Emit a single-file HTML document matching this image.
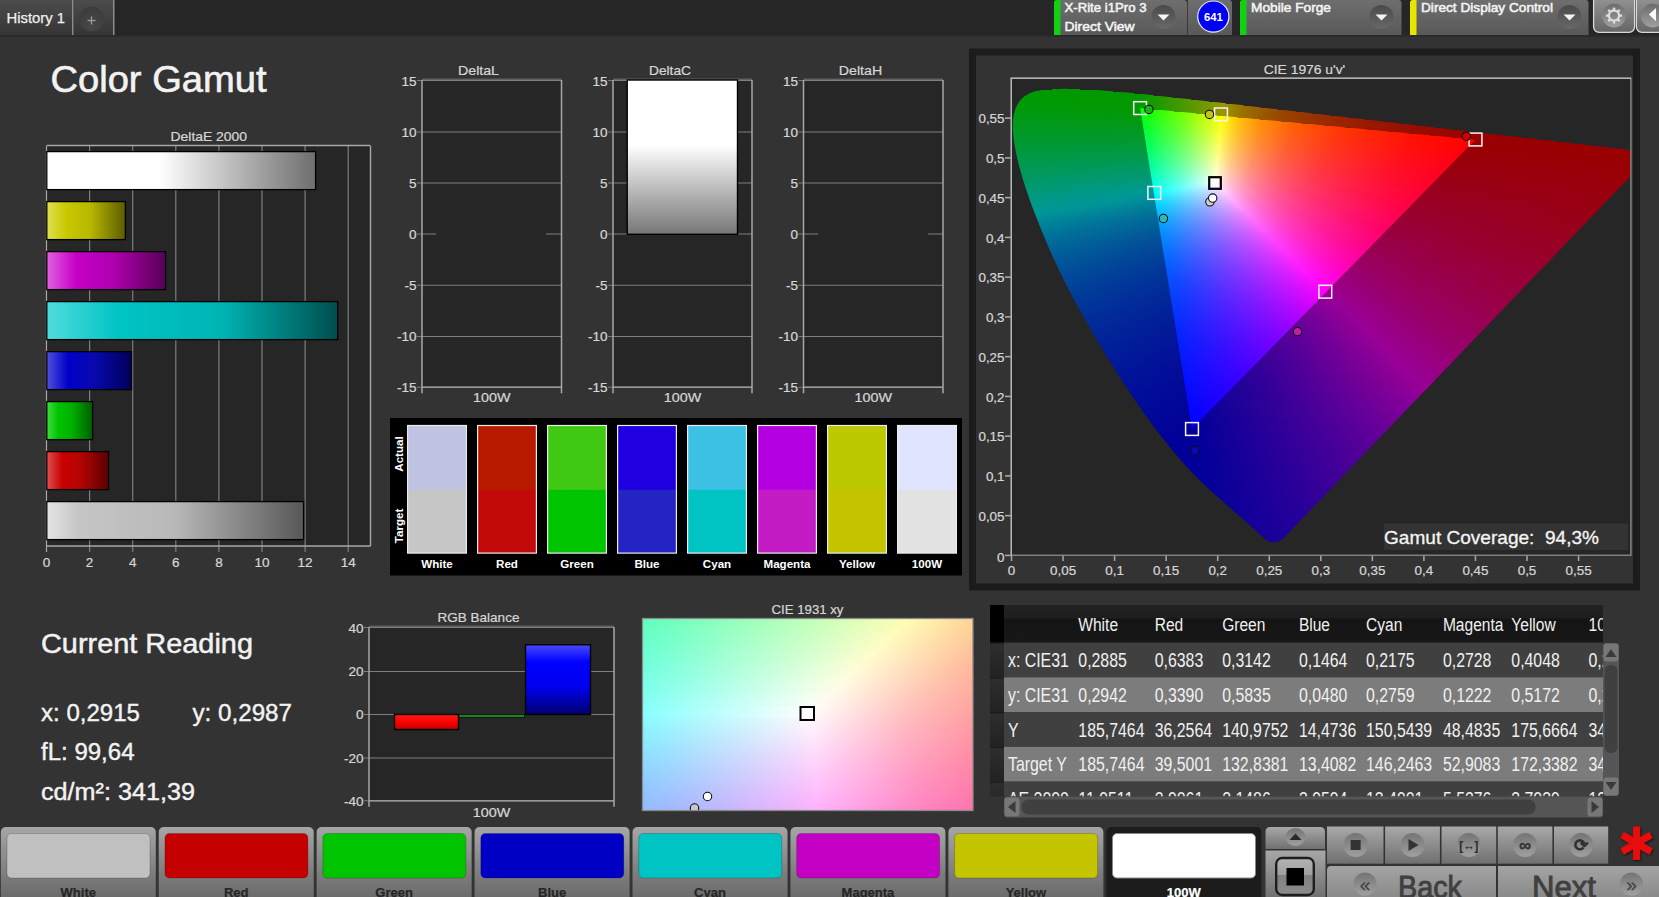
<!DOCTYPE html>
<html><head><meta charset="utf-8"><title>Color Gamut</title>
<style>
html,body{margin:0;padding:0;background:#333;}
body{width:1659px;height:897px;overflow:hidden;position:relative;font-family:"Liberation Sans", sans-serif;}
#cie,#tri,#xy{position:absolute;overflow:hidden}
#cie{left:1011px;top:78px;width:620px;height:478px;background:#262626}
#tri{left:0;top:0;width:620px;height:478px;clip-path:polygon(464.5px 61.5px,129.1px 30.1px,181.0px 351.0px)}
#xy{left:643px;top:619px;width:330px;height:191px}
#cie i,#xy i{position:absolute;display:block}
#cie i{height:2px}
#xy i{height:3px;left:0;width:330px}
svg{position:absolute;left:0;top:0}
svg text{font-family:"Liberation Sans", sans-serif;}
</style></head><body>
<div id="cie">
<i style="top:10px;left:41px;width:28px;background:linear-gradient(90deg,#090 0.5px,#090 27.5px)"></i>
<i style="top:12px;left:22px;width:80px;background:linear-gradient(90deg,#090 0.5px,#090 79.5px)"></i>
<i style="top:14px;left:16px;width:108px;background:linear-gradient(90deg,#090 0.5px,#090 107.5px)"></i>
<i style="top:16px;left:12px;width:131px;background:linear-gradient(90deg,#090 0.5px,#029900 116.5px,#129900 129.5px,#129900 130.5px)"></i>
<i style="top:18px;left:10px;width:152px;background:linear-gradient(90deg,#090 0.5px,#039900 119.5px,#309900 150.5px,#309900 151.5px)"></i>
<i style="top:20px;left:7px;width:173px;background:linear-gradient(90deg,#009902 0.5px,#039900 122.5px,#4f9900 170.5px,#4f9900 172.5px)"></i>
<i style="top:22px;left:6px;width:192px;background:linear-gradient(90deg,#009904 0.5px,#029900 123.5px,#590 173.5px,#739900 189.5px,#739900 191.5px)"></i>
<i style="top:24px;left:4px;width:211px;background:linear-gradient(90deg,#009906 0.5px,#029900 125.5px,#539900 174.5px,#990 208.5px,#990 210.5px)"></i>
<i style="top:26px;left:3px;width:230px;background:linear-gradient(90deg,#009908 0.5px,#039900 127.5px,#590 176.5px,#999600 209.5px,#997600 227.5px,#997600 229.5px)"></i>
<i style="top:28px;left:2px;width:248px;background:linear-gradient(90deg,#00990b 0.5px,#029900 128.5px,#590 177.5px,#999600 210.5px,#996900 235.5px,#995e00 247.5px)"></i>
<i style="top:30px;left:1px;width:266px;background:linear-gradient(90deg,#00990d 0.5px,#029901 129.5px,#590 178.5px,#999800 210.5px,#996c00 234.5px,#994c00 264.5px,#994c00 265.5px)"></i>
<i style="top:32px;left:1px;width:284px;background:linear-gradient(90deg,#00990f 0.5px,#039904 130.5px,#590 178.5px,#999700 210.5px,#996b00 234.5px,#940 271.5px,#993d00 283.5px)"></i>
<i style="top:34px;left:0px;width:302px;background:linear-gradient(90deg,#091 0.5px,#029906 131.5px,#699900 189.5px,#999700 211.5px,#996b00 235.5px,#940 272.5px,#993200 301.5px)"></i>
<i style="top:36px;left:0px;width:320px;background:linear-gradient(90deg,#009913 0.5px,#029909 131.5px,#999700 211.5px,#996a00 235.5px,#994300 272.5px,#992900 319.5px)"></i>
<i style="top:38px;left:0px;width:337px;background:linear-gradient(90deg,#009915 0.5px,#03990c 132.5px,#997f00 222.5px,#950 252.5px,#993100 299.5px,#992100 336.5px)"></i>
<i style="top:40px;left:0px;width:354px;background:linear-gradient(90deg,#009917 0.5px,#02990f 132.5px,#995c00 245.5px,#993700 288.5px,#991b00 353.5px)"></i>
<i style="top:42px;left:0px;width:372px;background:linear-gradient(90deg,#009919 0.5px,#029912 132.5px,#994700 266.5px,#992500 323.5px,#991500 371.5px)"></i>
<i style="top:44px;left:0px;width:389px;background:linear-gradient(90deg,#00991c 0.5px,#039915 133.5px,#993600 288.5px,#991700 361.5px,#910 388.5px)"></i>
<i style="top:46px;left:0px;width:406px;background:linear-gradient(90deg,#00991e 0.5px,#039918 133.5px,#992a00 310.5px,#990d00 401.5px,#990c00 405.5px)"></i>
<i style="top:48px;left:0px;width:424px;background:linear-gradient(90deg,#009920 0.5px,#02991b 133.5px,#992000 331.5px,#990900 423.5px)"></i>
<i style="top:50px;left:0px;width:441px;background:linear-gradient(90deg,#092 0.5px,#02991e 133.5px,#991800 354.5px,#990500 440.5px)"></i>
<i style="top:52px;left:0px;width:458px;background:linear-gradient(90deg,#009924 0.5px,#039921 134.5px,#991200 375.5px,#990300 457.5px)"></i>
<i style="top:54px;left:0px;width:476px;background:linear-gradient(90deg,#009927 0.5px,#029924 134.5px,#990c00 397.5px,#900 475.5px)"></i>
<i style="top:56px;left:0px;width:493px;background:linear-gradient(90deg,#009929 0.5px,#029927 134.5px,#990800 419.5px,#900 492.5px)"></i>
<i style="top:58px;left:0px;width:511px;background:linear-gradient(90deg,#00992b 0.5px,#03992a 135.5px,#990400 441.5px,#900 510.5px)"></i>
<i style="top:60px;left:0px;width:528px;background:linear-gradient(90deg,#00992e 0.5px,#02992d 135.5px,#900 462.5px,#900 527.5px)"></i>
<i style="top:62px;left:0px;width:545px;background:linear-gradient(90deg,#009930 0.5px,#029931 135.5px,#990001 466.5px,#900 544.5px)"></i>
<i style="top:64px;left:0px;width:563px;background:linear-gradient(90deg,#009932 0.5px,#039934 136.5px,#990002 464.5px,#900 562.5px)"></i>
<i style="top:66px;left:1px;width:579px;background:linear-gradient(90deg,#009935 0.5px,#029937 135.5px,#990002 461.5px,#900 578.5px)"></i>
<i style="top:68px;left:1px;width:597px;background:linear-gradient(90deg,#009937 0.5px,#02993b 135.5px,#990003 459.5px,#900 596.5px)"></i>
<i style="top:70px;left:1px;width:614px;background:linear-gradient(90deg,#00993a 0.5px,#03993e 136.5px,#990004 457.5px,#900 613.5px)"></i>
<i style="top:72px;left:2px;width:618px;background:linear-gradient(90deg,#00993c 0.5px,#029942 135.5px,#990005 454.5px,#900 617.5px)"></i>
<i style="top:74px;left:2px;width:618px;background:linear-gradient(90deg,#00993e 0.5px,#029945 135.5px,#990006 452.5px,#900 617.5px)"></i>
<i style="top:76px;left:3px;width:617px;background:linear-gradient(90deg,#009941 0.5px,#039949 135.5px,#990007 449.5px,#900 616.5px)"></i>
<i style="top:78px;left:3px;width:617px;background:linear-gradient(90deg,#094 0.5px,#03994d 135.5px,#990009 447.5px,#990001 616.5px)"></i>
<i style="top:80px;left:3px;width:617px;background:linear-gradient(90deg,#009946 0.5px,#029950 135.5px,#99000a 445.5px,#990001 616.5px)"></i>
<i style="top:82px;left:4px;width:616px;background:linear-gradient(90deg,#009949 0.5px,#019954 134.5px,#99000b 442.5px,#990002 615.5px)"></i>
<i style="top:84px;left:4px;width:616px;background:linear-gradient(90deg,#00994b 0.5px,#039958 135.5px,#99000c 441.5px,#990003 615.5px)"></i>
<i style="top:86px;left:5px;width:615px;background:linear-gradient(90deg,#00994e 0.5px,#02995c 134.5px,#99000d 438.5px,#990003 614.5px)"></i>
<i style="top:88px;left:5px;width:615px;background:linear-gradient(90deg,#009951 0.5px,#019960 134.5px,#99000e 435.5px,#990004 614.5px)"></i>
<i style="top:90px;left:6px;width:614px;background:linear-gradient(90deg,#009953 0.5px,#039964 134.5px,#99000f 432.5px,#990004 613.5px)"></i>
<i style="top:92px;left:7px;width:613px;background:linear-gradient(90deg,#009956 0.5px,#029968 133.5px,#990010 429.5px,#990005 612.5px)"></i>
<i style="top:94px;left:7px;width:613px;background:linear-gradient(90deg,#009959 0.5px,#02996c 133.5px,#990012 427.5px,#990006 612.5px)"></i>
<i style="top:96px;left:8px;width:612px;background:linear-gradient(90deg,#00995c 0.5px,#039970 133.5px,#990013 424.5px,#990006 611.5px)"></i>
<i style="top:98px;left:8px;width:612px;background:linear-gradient(90deg,#00995f 0.5px,#029975 133.5px,#990014 422.5px,#990007 611.5px)"></i>
<i style="top:100px;left:9px;width:611px;background:linear-gradient(90deg,#009962 0.5px,#029979 132.5px,#990015 419.5px,#990008 610.5px)"></i>
<i style="top:102px;left:9px;width:609px;background:linear-gradient(90deg,#009964 0.5px,#03997e 133.5px,#990016 417.5px,#990008 608.5px)"></i>
<i style="top:104px;left:10px;width:606px;background:linear-gradient(90deg,#009968 0.5px,#029982 132.5px,#990018 414.5px,#990009 605.5px)"></i>
<i style="top:106px;left:11px;width:603px;background:linear-gradient(90deg,#00996b 0.5px,#029986 131.5px,#990019 411.5px,#99000a 602.5px)"></i>
<i style="top:108px;left:11px;width:601px;background:linear-gradient(90deg,#00996e 0.5px,#00998a 129.5px,#99001a 409.5px,#99000a 600.5px)"></i>
<i style="top:110px;left:12px;width:598px;background:linear-gradient(90deg,#009971 0.5px,#00998e 125.5px,#09948d 140.5px,#99001c 406.5px,#99000b 597.5px)"></i>
<i style="top:112px;left:13px;width:595px;background:linear-gradient(90deg,#009974 0.5px,#009992 122.5px,#049995 131.5px,#99001d 403.5px,#99000c 594.5px)"></i>
<i style="top:114px;left:13px;width:593px;background:linear-gradient(90deg,#097 0.5px,#009995 119.5px,#039899 131.5px,#99001e 401.5px,#99000d 592.5px)"></i>
<i style="top:116px;left:14px;width:591px;background:linear-gradient(90deg,#00997a 0.5px,#009699 124.5px,#3c5c6c 229.5px,#990020 398.5px,#99000d 590.5px)"></i>
<i style="top:118px;left:15px;width:588px;background:linear-gradient(90deg,#00997e 0.5px,#009699 111.5px,#028f99 129.5px,#990021 395.5px,#99000e 587.5px)"></i>
<i style="top:120px;left:15px;width:586px;background:linear-gradient(90deg,#009981 0.5px,#009699 100.5px,#038b99 130.5px,#990023 393.5px,#99000f 585.5px)"></i>
<i style="top:122px;left:16px;width:583px;background:linear-gradient(90deg,#009984 0.5px,#009699 87.5px,#028699 129.5px,#990024 390.5px,#990010 582.5px)"></i>
<i style="top:124px;left:17px;width:580px;background:linear-gradient(90deg,#098 0.5px,#009699 75.5px,#028399 128.5px,#990026 387.5px,#990010 577.5px,#990010 579.5px)"></i>
<i style="top:126px;left:18px;width:577px;background:linear-gradient(90deg,#00998b 0.5px,#009599 63.5px,#037e99 128.5px,#990027 384.5px,#901 570.5px,#901 576.5px)"></i>
<i style="top:128px;left:18px;width:575px;background:linear-gradient(90deg,#00998f 0.5px,#009599 52.5px,#027b99 128.5px,#990029 382.5px,#990012 563.5px,#990012 574.5px)"></i>
<i style="top:130px;left:19px;width:572px;background:linear-gradient(90deg,#009992 0.5px,#009499 42.5px,#027899 127.5px,#99002b 378.5px,#990014 552.5px,#990013 571.5px)"></i>
<i style="top:132px;left:20px;width:569px;background:linear-gradient(90deg,#009996 0.5px,#008e99 49.5px,#037499 127.5px,#99002c 375.5px,#990015 544.5px,#990013 568.5px)"></i>
<i style="top:134px;left:21px;width:566px;background:linear-gradient(90deg,#009899 0.5px,#027199 126.5px,#99002e 373.5px,#990016 538.5px,#990014 565.5px)"></i>
<i style="top:136px;left:21px;width:564px;background:linear-gradient(90deg,#009599 0.5px,#026e99 126.5px,#990030 371.5px,#990018 531.5px,#990015 563.5px)"></i>
<i style="top:138px;left:22px;width:561px;background:linear-gradient(90deg,#009199 0.5px,#036a99 126.5px,#990031 368.5px,#990019 523.5px,#990016 560.5px)"></i>
<i style="top:140px;left:23px;width:559px;background:linear-gradient(90deg,#008e99 0.5px,#026899 125.5px,#903 365.5px,#99001a 516.5px,#990017 558.5px)"></i>
<i style="top:142px;left:24px;width:556px;background:linear-gradient(90deg,#008b99 0.5px,#026599 124.5px,#990035 362.5px,#99001c 508.5px,#990018 555.5px)"></i>
<i style="top:144px;left:25px;width:553px;background:linear-gradient(90deg,#008799 0.5px,#036299 124.5px,#990037 359.5px,#99001d 501.5px,#990018 552.5px)"></i>
<i style="top:146px;left:25px;width:551px;background:linear-gradient(90deg,#008499 0.5px,#025f99 124.5px,#990039 357.5px,#99001f 495.5px,#990019 550.5px)"></i>
<i style="top:148px;left:26px;width:548px;background:linear-gradient(90deg,#008199 0.5px,#035d99 124.5px,#99003a 354.5px,#990020 488.5px,#99001a 547.5px)"></i>
<i style="top:150px;left:27px;width:545px;background:linear-gradient(90deg,#007e99 0.5px,#025a99 123.5px,#99003c 351.5px,#902 481.5px,#99001b 544.5px)"></i>
<i style="top:152px;left:28px;width:542px;background:linear-gradient(90deg,#007b99 0.5px,#025899 122.5px,#99003e 348.5px,#990023 475.5px,#99001c 541.5px)"></i>
<i style="top:154px;left:29px;width:539px;background:linear-gradient(90deg,#007999 0.5px,#035699 122.5px,#990040 345.5px,#990025 468.5px,#99001d 538.5px)"></i>
<i style="top:156px;left:29px;width:537px;background:linear-gradient(90deg,#007699 0.5px,#025399 122.5px,#990042 343.5px,#990027 463.5px,#99001e 536.5px)"></i>
<i style="top:158px;left:30px;width:534px;background:linear-gradient(90deg,#007499 0.5px,#025199 121.5px,#990045 340.5px,#990028 456.5px,#99001f 533.5px)"></i>
<i style="top:160px;left:31px;width:531px;background:linear-gradient(90deg,#007199 0.5px,#034f99 121.5px,#990047 337.5px,#99002a 450.5px,#990020 530.5px)"></i>
<i style="top:162px;left:32px;width:528px;background:linear-gradient(90deg,#006e99 0.5px,#024d99 120.5px,#990049 334.5px,#99002c 444.5px,#990021 527.5px)"></i>
<i style="top:164px;left:33px;width:526px;background:linear-gradient(90deg,#006c99 0.5px,#024b99 119.5px,#99004b 331.5px,#99002e 438.5px,#990021 525.5px)"></i>
<i style="top:166px;left:34px;width:523px;background:linear-gradient(90deg,#006a99 0.5px,#034999 119.5px,#99004e 328.5px,#990030 432.5px,#902 522.5px)"></i>
<i style="top:168px;left:35px;width:520px;background:linear-gradient(90deg,#006799 0.5px,#024799 118.5px,#990050 325.5px,#990031 426.5px,#990023 519.5px)"></i>
<i style="top:170px;left:35px;width:518px;background:linear-gradient(90deg,#006599 0.5px,#034599 119.5px,#990052 323.5px,#990034 421.5px,#990024 517.5px)"></i>
<i style="top:172px;left:36px;width:515px;background:linear-gradient(90deg,#006399 0.5px,#034499 118.5px,#905 320.5px,#990036 415.5px,#990025 514.5px)"></i>
<i style="top:174px;left:37px;width:512px;background:linear-gradient(90deg,#006199 0.5px,#024299 117.5px,#990058 316.5px,#990038 408.5px,#990026 511.5px)"></i>
<i style="top:176px;left:38px;width:509px;background:linear-gradient(90deg,#005f99 0.5px,#034099 117.5px,#99005a 313.5px,#99003a 402.5px,#990027 508.5px)"></i>
<i style="top:178px;left:39px;width:506px;background:linear-gradient(90deg,#005d99 0.5px,#033f99 116.5px,#99005d 310.5px,#99003c 397.5px,#990028 505.5px)"></i>
<i style="top:180px;left:40px;width:503px;background:linear-gradient(90deg,#005b99 0.5px,#023d99 115.5px,#990060 307.5px,#99003f 391.5px,#990029 502.5px)"></i>
<i style="top:182px;left:41px;width:500px;background:linear-gradient(90deg,#005999 0.5px,#033c99 115.5px,#990062 305.5px,#990040 388.5px,#99002b 499.5px)"></i>
<i style="top:184px;left:42px;width:497px;background:linear-gradient(90deg,#005799 0.5px,#023a99 114.5px,#990065 302.5px,#990043 382.5px,#99002c 496.5px)"></i>
<i style="top:186px;left:43px;width:494px;background:linear-gradient(90deg,#059 0.5px,#023999 113.5px,#990068 299.5px,#990045 377.5px,#99002d 493.5px)"></i>
<i style="top:188px;left:44px;width:492px;background:linear-gradient(90deg,#005399 0.5px,#033799 113.5px,#99006b 296.5px,#990048 372.5px,#99002e 491.5px)"></i>
<i style="top:190px;left:45px;width:489px;background:linear-gradient(90deg,#005299 0.5px,#023699 112.5px,#99006e 293.5px,#99004a 367.5px,#99002f 488.5px)"></i>
<i style="top:192px;left:45px;width:487px;background:linear-gradient(90deg,#005099 0.5px,#033599 113.5px,#990071 291.5px,#99004d 363.5px,#990030 484.5px,#990030 486.5px)"></i>
<i style="top:194px;left:46px;width:484px;background:linear-gradient(90deg,#004e99 0.5px,#033399 112.5px,#990074 288.5px,#990050 357.5px,#990032 477.5px,#990031 483.5px)"></i>
<i style="top:196px;left:47px;width:481px;background:linear-gradient(90deg,#004d99 0.5px,#023299 111.5px,#907 285.5px,#990053 352.5px,#990034 467.5px,#990032 480.5px)"></i>
<i style="top:198px;left:48px;width:478px;background:linear-gradient(90deg,#004b99 0.5px,#033199 111.5px,#99007b 282.5px,#905 348.5px,#990036 460.5px,#903 477.5px)"></i>
<i style="top:200px;left:49px;width:475px;background:linear-gradient(90deg,#004999 0.5px,#033099 110.5px,#99007e 279.5px,#990058 343.5px,#990039 450.5px,#990035 474.5px)"></i>
<i style="top:202px;left:50px;width:472px;background:linear-gradient(90deg,#004899 0.5px,#022e99 109.5px,#990082 276.5px,#99005b 338.5px,#99003b 441.5px,#990036 471.5px)"></i>
<i style="top:204px;left:51px;width:469px;background:linear-gradient(90deg,#004699 0.5px,#032d99 109.5px,#990085 273.5px,#99005f 333.5px,#99003e 432.5px,#990037 468.5px)"></i>
<i style="top:206px;left:52px;width:466px;background:linear-gradient(90deg,#004599 0.5px,#032c99 108.5px,#990089 270.5px,#990062 328.5px,#990040 424.5px,#990038 465.5px)"></i>
<i style="top:208px;left:53px;width:463px;background:linear-gradient(90deg,#004399 0.5px,#022b99 107.5px,#99008d 267.5px,#990065 323.5px,#990043 415.5px,#990039 462.5px)"></i>
<i style="top:210px;left:55px;width:459px;background:linear-gradient(90deg,#004299 0.5px,#032a99 106.5px,#990091 263.5px,#990069 318.5px,#990046 407.5px,#99003b 458.5px)"></i>
<i style="top:212px;left:56px;width:457px;background:linear-gradient(90deg,#004099 0.5px,#032999 105.5px,#990096 259.5px,#99006d 311.5px,#99004a 395.5px,#99003c 456.5px)"></i>
<i style="top:214px;left:57px;width:454px;background:linear-gradient(90deg,#003f99 0.5px,#022899 104.5px,#990096 260.5px,#99006d 313.5px,#99004a 398.5px,#99003d 453.5px)"></i>
<i style="top:216px;left:58px;width:451px;background:linear-gradient(90deg,#003e99 0.5px,#032799 104.5px,#990096 261.5px,#99006d 315.5px,#99004a 401.5px,#99003e 450.5px)"></i>
<i style="top:218px;left:59px;width:448px;background:linear-gradient(90deg,#003c99 0.5px,#022699 103.5px,#990096 262.5px,#99006d 316.5px,#99004a 403.5px,#990040 447.5px)"></i>
<i style="top:220px;left:60px;width:445px;background:linear-gradient(90deg,#003b99 0.5px,#032599 103.5px,#909 260.5px,#99006f 315.5px,#99004b 401.5px,#990041 444.5px)"></i>
<i style="top:222px;left:61px;width:442px;background:linear-gradient(90deg,#003a99 0.5px,#032499 102.5px,#960099 258.5px,#990082 287.5px,#99005c 355.5px,#990042 441.5px)"></i>
<i style="top:224px;left:62px;width:439px;background:linear-gradient(90deg,#003899 0.5px,#022399 101.5px,#920099 255.5px,#990094 267.5px,#99006c 324.5px,#990049 416.5px,#904 438.5px)"></i>
<i style="top:226px;left:63px;width:436px;background:linear-gradient(90deg,#003799 0.5px,#032299 101.5px,#8e0099 252.5px,#990095 267.5px,#99006d 324.5px,#990049 416.5px,#990045 435.5px)"></i>
<i style="top:228px;left:64px;width:433px;background:linear-gradient(90deg,#003699 0.5px,#032199 100.5px,#8a0099 249.5px,#990096 268.5px,#99006d 325.5px,#99004a 417.5px,#990047 432.5px)"></i>
<i style="top:230px;left:65px;width:430px;background:linear-gradient(90deg,#003599 0.5px,#022099 99.5px,#860099 246.5px,#990096 269.5px,#99006d 327.5px,#99004a 420.5px,#990048 429.5px)"></i>
<i style="top:232px;left:66px;width:427px;background:linear-gradient(90deg,#003499 0.5px,#031f99 99.5px,#830099 244.5px,#990096 270.5px,#99006c 329.5px,#990049 423.5px,#990049 426.5px)"></i>
<i style="top:234px;left:67px;width:424px;background:linear-gradient(90deg,#039 0.5px,#031e99 98.5px,#800099 241.5px,#990096 271.5px,#99006d 330.5px,#99004b 421.5px,#99004b 423.5px)"></i>
<i style="top:236px;left:69px;width:420px;background:linear-gradient(90deg,#003199 0.5px,#021e99 96.5px,#7c0099 237.5px,#990096 271.5px,#99006d 331.5px,#99004c 419.5px)"></i>
<i style="top:238px;left:70px;width:418px;background:linear-gradient(90deg,#003099 0.5px,#031d99 96.5px,#790099 234.5px,#990096 272.5px,#99006d 332.5px,#99004e 417.5px)"></i>
<i style="top:240px;left:71px;width:415px;background:linear-gradient(90deg,#002f99 0.5px,#031c99 95.5px,#709 232.5px,#990096 273.5px,#99006d 334.5px,#99004f 414.5px)"></i>
<i style="top:242px;left:72px;width:412px;background:linear-gradient(90deg,#002e99 0.5px,#031b99 95.5px,#730099 229.5px,#990096 274.5px,#99006d 335.5px,#990051 411.5px)"></i>
<i style="top:244px;left:73px;width:409px;background:linear-gradient(90deg,#002d99 0.5px,#031a99 94.5px,#700099 226.5px,#990096 275.5px,#99006d 337.5px,#990052 408.5px)"></i>
<i style="top:246px;left:74px;width:406px;background:linear-gradient(90deg,#002c99 0.5px,#031a99 93.5px,#6d0099 223.5px,#990096 276.5px,#99006d 339.5px,#990054 405.5px)"></i>
<i style="top:248px;left:75px;width:403px;background:linear-gradient(90deg,#002b99 0.5px,#031999 93.5px,#6a0099 220.5px,#990096 277.5px,#99006d 340.5px,#990056 402.5px)"></i>
<i style="top:250px;left:77px;width:399px;background:linear-gradient(90deg,#002a99 0.5px,#031899 91.5px,#680099 217.5px,#990096 277.5px,#99006d 341.5px,#990057 398.5px)"></i>
<i style="top:252px;left:78px;width:396px;background:linear-gradient(90deg,#002999 0.5px,#031799 90.5px,#650099 214.5px,#990096 278.5px,#99006d 342.5px,#990059 395.5px)"></i>
<i style="top:254px;left:79px;width:393px;background:linear-gradient(90deg,#002899 0.5px,#031799 90.5px,#620099 211.5px,#990096 279.5px,#99006d 344.5px,#99005b 392.5px)"></i>
<i style="top:256px;left:80px;width:390px;background:linear-gradient(90deg,#002799 0.5px,#031699 89.5px,#600099 209.5px,#990096 280.5px,#99006d 345.5px,#99005c 389.5px)"></i>
<i style="top:258px;left:81px;width:387px;background:linear-gradient(90deg,#002699 0.5px,#021599 88.5px,#5d0099 206.5px,#990096 281.5px,#99006d 347.5px,#99005e 386.5px)"></i>
<i style="top:260px;left:82px;width:384px;background:linear-gradient(90deg,#002599 0.5px,#031599 88.5px,#5b0099 203.5px,#990096 282.5px,#99006d 348.5px,#990060 383.5px)"></i>
<i style="top:262px;left:84px;width:381px;background:linear-gradient(90deg,#002499 0.5px,#031499 86.5px,#580099 199.5px,#990096 282.5px,#99006d 349.5px,#990061 380.5px)"></i>
<i style="top:264px;left:85px;width:378px;background:linear-gradient(90deg,#002399 0.5px,#031399 86.5px,#560099 197.5px,#990096 283.5px,#99006d 351.5px,#990063 377.5px)"></i>
<i style="top:266px;left:86px;width:375px;background:linear-gradient(90deg,#029 0.5px,#031399 85.5px,#530099 194.5px,#990096 284.5px,#99006d 352.5px,#990065 374.5px)"></i>
<i style="top:268px;left:87px;width:372px;background:linear-gradient(90deg,#002199 0.5px,#031299 84.5px,#510099 191.5px,#990096 285.5px,#99006d 354.5px,#990067 371.5px)"></i>
<i style="top:270px;left:88px;width:369px;background:linear-gradient(90deg,#002199 0.5px,#031199 84.5px,#4f0099 189.5px,#990096 286.5px,#99006d 355.5px,#990069 368.5px)"></i>
<i style="top:272px;left:90px;width:365px;background:linear-gradient(90deg,#002099 0.5px,#031199 82.5px,#4d0099 185.5px,#990096 286.5px,#99006d 356.5px,#99006b 364.5px)"></i>
<i style="top:274px;left:91px;width:362px;background:linear-gradient(90deg,#001f99 0.5px,#031099 81.5px,#4a0099 182.5px,#990096 287.5px,#99006d 357.5px,#99006d 361.5px)"></i>
<i style="top:276px;left:92px;width:359px;background:linear-gradient(90deg,#001e99 0.5px,#031099 81.5px,#490099 180.5px,#990096 288.5px,#99006f 356.5px,#99006f 358.5px)"></i>
<i style="top:278px;left:93px;width:356px;background:linear-gradient(90deg,#001d99 0.5px,#030f99 80.5px,#470099 177.5px,#990096 289.5px,#990071 354.5px,#990071 355.5px)"></i>
<i style="top:280px;left:94px;width:353px;background:linear-gradient(90deg,#001c99 0.5px,#030f99 79.5px,#409 174.5px,#990096 290.5px,#990073 351.5px,#990073 352.5px)"></i>
<i style="top:282px;left:96px;width:349px;background:linear-gradient(90deg,#001c99 0.5px,#030e99 78.5px,#430099 171.5px,#990096 290.5px,#990075 348.5px)"></i>
<i style="top:284px;left:97px;width:346px;background:linear-gradient(90deg,#001b99 0.5px,#030d99 77.5px,#410099 168.5px,#990096 291.5px,#907 345.5px)"></i>
<i style="top:286px;left:98px;width:344px;background:linear-gradient(90deg,#001a99 0.5px,#030d99 77.5px,#3f0099 166.5px,#990096 292.5px,#990079 343.5px)"></i>
<i style="top:288px;left:99px;width:341px;background:linear-gradient(90deg,#001999 0.5px,#030c99 76.5px,#3d0099 163.5px,#990097 293.5px,#99007b 340.5px)"></i>
<i style="top:290px;left:101px;width:337px;background:linear-gradient(90deg,#001899 0.5px,#030c99 74.5px,#3c0099 160.5px,#990097 293.5px,#99007e 336.5px)"></i>
<i style="top:292px;left:102px;width:334px;background:linear-gradient(90deg,#001899 0.5px,#030b99 74.5px,#3a0099 157.5px,#990097 294.5px,#990080 333.5px)"></i>
<i style="top:294px;left:103px;width:331px;background:linear-gradient(90deg,#001799 0.5px,#030b99 73.5px,#380099 155.5px,#990097 295.5px,#990082 330.5px)"></i>
<i style="top:296px;left:104px;width:328px;background:linear-gradient(90deg,#001699 0.5px,#030a99 72.5px,#370099 153.5px,#990096 297.5px,#990085 327.5px)"></i>
<i style="top:298px;left:106px;width:324px;background:linear-gradient(90deg,#001599 0.5px,#030a99 71.5px,#350099 149.5px,#990096 297.5px,#990087 323.5px)"></i>
<i style="top:300px;left:107px;width:321px;background:linear-gradient(90deg,#001599 0.5px,#030999 70.5px,#340099 147.5px,#990096 298.5px,#99008a 320.5px)"></i>
<i style="top:302px;left:108px;width:318px;background:linear-gradient(90deg,#001499 0.5px,#030999 70.5px,#320099 145.5px,#990096 299.5px,#99008c 317.5px)"></i>
<i style="top:304px;left:110px;width:314px;background:linear-gradient(90deg,#001399 0.5px,#030899 68.5px,#310099 142.5px,#990096 299.5px,#99008f 313.5px)"></i>
<i style="top:306px;left:111px;width:311px;background:linear-gradient(90deg,#001399 0.5px,#030899 67.5px,#300099 140.5px,#990096 300.5px,#990091 310.5px)"></i>
<i style="top:308px;left:112px;width:308px;background:linear-gradient(90deg,#001299 0.5px,#030799 67.5px,#300099 139.5px,#990096 301.5px,#990094 307.5px)"></i>
<i style="top:310px;left:113px;width:306px;background:linear-gradient(90deg,#019 0.5px,#030799 66.5px,#2e0099 137.5px,#990096 302.5px,#990096 305.5px)"></i>
<i style="top:312px;left:115px;width:302px;background:linear-gradient(90deg,#019 0.5px,#030799 64.5px,#2e0099 135.5px,#909 301.5px)"></i>
<i style="top:314px;left:116px;width:299px;background:linear-gradient(90deg,#001099 0.5px,#030699 64.5px,#2e0099 135.5px,#960099 298.5px)"></i>
<i style="top:316px;left:117px;width:296px;background:linear-gradient(90deg,#000f99 0.5px,#030699 63.5px,#2d0099 134.5px,#940099 295.5px)"></i>
<i style="top:318px;left:119px;width:292px;background:linear-gradient(90deg,#000f99 0.5px,#030599 62.5px,#2f0099 136.5px,#910099 291.5px)"></i>
<i style="top:320px;left:120px;width:289px;background:linear-gradient(90deg,#000e99 0.5px,#030599 61.5px,#310099 138.5px,#8e0099 288.5px)"></i>
<i style="top:322px;left:122px;width:285px;background:linear-gradient(90deg,#000d99 0.5px,#030499 59.5px,#340099 142.5px,#8c0099 284.5px)"></i>
<i style="top:324px;left:123px;width:282px;background:linear-gradient(90deg,#000d99 0.5px,#030499 59.5px,#3f0099 160.5px,#890099 281.5px)"></i>
<i style="top:326px;left:124px;width:279px;background:linear-gradient(90deg,#000c99 0.5px,#030499 58.5px,#540099 195.5px,#870099 278.5px)"></i>
<i style="top:328px;left:126px;width:275px;background:linear-gradient(90deg,#000c99 0.5px,#030399 56.5px,#840099 274.5px)"></i>
<i style="top:330px;left:127px;width:272px;background:linear-gradient(90deg,#000b99 0.5px,#030399 56.5px,#820099 271.5px)"></i>
<i style="top:332px;left:129px;width:268px;background:linear-gradient(90deg,#000a99 0.5px,#030299 54.5px,#7f0099 267.5px)"></i>
<i style="top:334px;left:130px;width:266px;background:linear-gradient(90deg,#000a99 0.5px,#030299 54.5px,#7e0099 265.5px)"></i>
<i style="top:336px;left:131px;width:263px;background:linear-gradient(90deg,#000999 0.5px,#030299 53.5px,#7b0099 262.5px)"></i>
<i style="top:338px;left:133px;width:259px;background:linear-gradient(90deg,#000999 0.5px,#030199 52.5px,#790099 258.5px)"></i>
<i style="top:340px;left:134px;width:256px;background:linear-gradient(90deg,#000899 0.5px,#030199 51.5px,#709 255.5px)"></i>
<i style="top:342px;left:136px;width:252px;background:linear-gradient(90deg,#000899 0.5px,#030199 49.5px,#750099 251.5px)"></i>
<i style="top:344px;left:137px;width:249px;background:linear-gradient(90deg,#000799 0.5px,#030099 49.5px,#720099 248.5px)"></i>
<i style="top:346px;left:139px;width:245px;background:linear-gradient(90deg,#000699 0.5px,#030099 47.5px,#700099 244.5px)"></i>
<i style="top:348px;left:140px;width:242px;background:linear-gradient(90deg,#000699 0.5px,#030099 46.5px,#6e0099 241.5px)"></i>
<i style="top:350px;left:142px;width:238px;background:linear-gradient(90deg,#000599 0.5px,#030099 45.5px,#6c0099 237.5px)"></i>
<i style="top:352px;left:143px;width:235px;background:linear-gradient(90deg,#000599 0.5px,#030099 44.5px,#6a0099 234.5px)"></i>
<i style="top:354px;left:145px;width:231px;background:linear-gradient(90deg,#000499 0.5px,#030099 43.5px,#680099 230.5px)"></i>
<i style="top:356px;left:146px;width:228px;background:linear-gradient(90deg,#000499 0.5px,#030099 42.5px,#609 227.5px)"></i>
<i style="top:358px;left:148px;width:224px;background:linear-gradient(90deg,#000399 0.5px,#040099 41.5px,#640099 223.5px)"></i>
<i style="top:360px;left:149px;width:222px;background:linear-gradient(90deg,#000399 0.5px,#030099 40.5px,#630099 221.5px)"></i>
<i style="top:362px;left:151px;width:218px;background:linear-gradient(90deg,#000299 0.5px,#040099 39.5px,#610099 217.5px)"></i>
<i style="top:364px;left:153px;width:214px;background:linear-gradient(90deg,#000299 0.5px,#040099 37.5px,#5f0099 213.5px)"></i>
<i style="top:366px;left:154px;width:211px;background:linear-gradient(90deg,#000199 0.5px,#030099 36.5px,#5d0099 210.5px)"></i>
<i style="top:368px;left:156px;width:207px;background:linear-gradient(90deg,#000199 0.5px,#040099 35.5px,#5b0099 206.5px)"></i>
<i style="top:370px;left:157px;width:204px;background:linear-gradient(90deg,#009 0.5px,#040099 34.5px,#590099 203.5px)"></i>
<i style="top:372px;left:159px;width:200px;background:linear-gradient(90deg,#009 0.5px,#040099 33.5px,#570099 199.5px)"></i>
<i style="top:374px;left:161px;width:196px;background:linear-gradient(90deg,#009 0.5px,#040099 32.5px,#560099 195.5px)"></i>
<i style="top:376px;left:162px;width:193px;background:linear-gradient(90deg,#009 0.5px,#040099 31.5px,#540099 192.5px)"></i>
<i style="top:378px;left:164px;width:189px;background:linear-gradient(90deg,#009 0.5px,#040099 30.5px,#520099 188.5px)"></i>
<i style="top:380px;left:166px;width:185px;background:linear-gradient(90deg,#009 0.5px,#050099 29.5px,#500099 184.5px)"></i>
<i style="top:382px;left:167px;width:182px;background:linear-gradient(90deg,#009 0.5px,#040099 28.5px,#4f0099 181.5px)"></i>
<i style="top:384px;left:169px;width:179px;background:linear-gradient(90deg,#009 0.5px,#050099 27.5px,#4e0099 178.5px)"></i>
<i style="top:386px;left:171px;width:175px;background:linear-gradient(90deg,#009 0.5px,#050099 26.5px,#4c0099 174.5px)"></i>
<i style="top:388px;left:173px;width:171px;background:linear-gradient(90deg,#009 0.5px,#060099 26.5px,#4a0099 170.5px)"></i>
<i style="top:390px;left:175px;width:167px;background:linear-gradient(90deg,#009 0.5px,#060099 26.5px,#490099 166.5px)"></i>
<i style="top:392px;left:177px;width:163px;background:linear-gradient(90deg,#009 0.5px,#090099 29.5px,#470099 162.5px)"></i>
<i style="top:394px;left:178px;width:160px;background:linear-gradient(90deg,#009 0.5px,#090099 30.5px,#460099 159.5px)"></i>
<i style="top:396px;left:180px;width:156px;background:linear-gradient(90deg,#009 0.5px,#100099 43.5px,#409 155.5px)"></i>
<i style="top:398px;left:182px;width:152px;background:linear-gradient(90deg,#009 0.5px,#430099 151.5px)"></i>
<i style="top:400px;left:184px;width:148px;background:linear-gradient(90deg,#009 0.5px,#410099 147.5px)"></i>
<i style="top:402px;left:186px;width:144px;background:linear-gradient(90deg,#009 0.5px,#400099 143.5px)"></i>
<i style="top:404px;left:188px;width:140px;background:linear-gradient(90deg,#010099 0.5px,#3e0099 139.5px)"></i>
<i style="top:406px;left:191px;width:135px;background:linear-gradient(90deg,#020099 0.5px,#3d0099 134.5px)"></i>
<i style="top:408px;left:193px;width:132px;background:linear-gradient(90deg,#030099 0.5px,#3c0099 131.5px)"></i>
<i style="top:410px;left:195px;width:128px;background:linear-gradient(90deg,#030099 0.5px,#3a0099 127.5px)"></i>
<i style="top:412px;left:197px;width:124px;background:linear-gradient(90deg,#040099 0.5px,#390099 123.5px)"></i>
<i style="top:414px;left:199px;width:120px;background:linear-gradient(90deg,#050099 0.5px,#380099 119.5px)"></i>
<i style="top:416px;left:201px;width:116px;background:linear-gradient(90deg,#060099 0.5px,#360099 115.5px)"></i>
<i style="top:418px;left:204px;width:111px;background:linear-gradient(90deg,#070099 0.5px,#350099 110.5px)"></i>
<i style="top:420px;left:206px;width:107px;background:linear-gradient(90deg,#070099 0.5px,#340099 106.5px)"></i>
<i style="top:422px;left:208px;width:103px;background:linear-gradient(90deg,#080099 0.5px,#320099 102.5px)"></i>
<i style="top:424px;left:211px;width:98px;background:linear-gradient(90deg,#090099 0.5px,#310099 97.5px)"></i>
<i style="top:426px;left:213px;width:94px;background:linear-gradient(90deg,#0a0099 0.5px,#300099 93.5px)"></i>
<i style="top:428px;left:215px;width:90px;background:linear-gradient(90deg,#0a0099 0.5px,#2e0099 89.5px)"></i>
<i style="top:430px;left:217px;width:86px;background:linear-gradient(90deg,#0b0099 0.5px,#2d0099 85.5px)"></i>
<i style="top:432px;left:220px;width:82px;background:linear-gradient(90deg,#0c0099 0.5px,#2c0099 81.5px)"></i>
<i style="top:434px;left:222px;width:78px;background:linear-gradient(90deg,#0d0099 0.5px,#2b0099 77.5px)"></i>
<i style="top:436px;left:224px;width:74px;background:linear-gradient(90deg,#0d0099 0.5px,#2a0099 73.5px)"></i>
<i style="top:438px;left:226px;width:70px;background:linear-gradient(90deg,#0e0099 0.5px,#290099 69.5px)"></i>
<i style="top:440px;left:229px;width:65px;background:linear-gradient(90deg,#0f0099 0.5px,#270099 64.5px)"></i>
<i style="top:442px;left:231px;width:61px;background:linear-gradient(90deg,#100099 0.5px,#260099 60.5px)"></i>
<i style="top:444px;left:233px;width:57px;background:linear-gradient(90deg,#100099 0.5px,#250099 56.5px)"></i>
<i style="top:446px;left:235px;width:53px;background:linear-gradient(90deg,#109 0.5px,#240099 52.5px)"></i>
<i style="top:448px;left:238px;width:48px;background:linear-gradient(90deg,#120099 0.5px,#230099 47.5px)"></i>
<i style="top:450px;left:240px;width:44px;background:linear-gradient(90deg,#130099 0.5px,#209 43.5px)"></i>
<i style="top:452px;left:242px;width:40px;background:linear-gradient(90deg,#130099 0.5px,#210099 39.5px)"></i>
<i style="top:454px;left:245px;width:35px;background:linear-gradient(90deg,#140099 0.5px,#1f0099 34.5px)"></i>
<i style="top:456px;left:247px;width:31px;background:linear-gradient(90deg,#150099 0.5px,#1e0099 30.5px)"></i>
<i style="top:458px;left:249px;width:28px;background:linear-gradient(90deg,#150099 0.5px,#1e0099 27.5px)"></i>
<i style="top:460px;left:251px;width:23px;background:linear-gradient(90deg,#160099 0.5px,#1c0099 22.5px)"></i>
<i style="top:462px;left:255px;width:17px;background:linear-gradient(90deg,#170099 0.5px,#1b0099 16.5px)"></i>
<div id="tri">
<i style="top:30px;left:126px;width:16px;background:linear-gradient(90deg,#00ff03 0.5px,#05ff02 5.5px,#1fff00 15.5px)"></i>
<i style="top:32px;left:127px;width:36px;background:linear-gradient(90deg,#00ff07 0.5px,#07ff06 5.5px,#58ff00 35.5px)"></i>
<i style="top:34px;left:127px;width:58px;background:linear-gradient(90deg,#00ff0b 0.5px,#06ff0b 5.5px,#70ff03 43.5px,#9eff00 57.5px)"></i>
<i style="top:36px;left:127px;width:79px;background:linear-gradient(90deg,#00ff10 0.5px,#06ff0f 5.5px,#70ff08 43.5px,#dfff00 75.5px,#ebff00 78.5px)"></i>
<i style="top:38px;left:128px;width:99px;background:linear-gradient(90deg,#00ff15 0.5px,#07ff14 5.5px,#70ff0d 42.5px,#e0ff06 74.5px,#fffe04 82.5px,#ffc800 98.5px)"></i>
<i style="top:40px;left:128px;width:121px;background:linear-gradient(90deg,#00ff19 0.5px,#07ff19 5.5px,#6fff12 42.5px,#dcff0c 73.5px,#fffd0a 82.5px,#ffc404 99.5px,#ff9400 120.5px)"></i>
<i style="top:42px;left:128px;width:142px;background:linear-gradient(90deg,#00ff1e 0.5px,#06ff1d 5.5px,#6fff18 42.5px,#ddff12 73.5px,#fffd10 82.5px,#ffc309 99.5px,#ff8d03 123.5px,#ff7100 141.5px)"></i>
<i style="top:44px;left:129px;width:162px;background:linear-gradient(90deg,#00ff23 0.5px,#05ff22 4.5px,#6fff1d 41.5px,#ddff18 72.5px,#fffc16 81.5px,#ffc20e 98.5px,#ff8d07 122.5px,#ff5d00 156.5px,#ff5800 161.5px)"></i>
<i style="top:46px;left:129px;width:184px;background:linear-gradient(90deg,#00ff28 0.5px,#07ff27 5.5px,#6fff23 41.5px,#deff1e 72.5px,#ffff1d 80.5px,#ffc414 97.5px,#ff8f0b 120.5px,#ff6004 153.5px,#f40 183.5px)"></i>
<i style="top:48px;left:129px;width:205px;background:linear-gradient(90deg,#00ff2d 0.5px,#06ff2c 5.5px,#6fff28 41.5px,#deff24 72.5px,#fffe23 80.5px,#ffc319 97.5px,#ff8f0f 120.5px,#ff5f07 153.5px,#ff3600 202.5px,#ff3400 204.5px)"></i>
<i style="top:50px;left:130px;width:226px;background:linear-gradient(90deg,#00ff32 0.5px,#05ff31 4.5px,#6eff2e 40.5px,#dbff2b 70.5px,#fffe29 79.5px,#ffc21e 96.5px,#ff8e14 119.5px,#ff5e0a 152.5px,#ff3502 201.5px,#ff2700 225.5px)"></i>
<i style="top:52px;left:130px;width:247px;background:linear-gradient(90deg,#00ff37 0.5px,#07ff36 5.5px,#71ff34 41.5px,#e0ff31 71.5px,#fffd30 79.5px,#ffc223 96.5px,#ff8d18 119.5px,#ff5e0e 152.5px,#ff3405 201.5px,#ff1d00 246.5px)"></i>
<i style="top:54px;left:130px;width:268px;background:linear-gradient(90deg,#00ff3c 0.5px,#06ff3c 5.5px,#6eff3a 40.5px,#dcff37 70.5px,#fffc36 79.5px,#ffc128 96.5px,#ff8c1c 119.5px,#ff5d11 152.5px,#ff3407 201.5px,#ff1400 267.5px)"></i>
<i style="top:56px;left:130px;width:290px;background:linear-gradient(90deg,#00ff41 0.5px,#03ff41 4.5px,#6aff3f 39.5px,#d9ff3e 69.5px,#ffff3d 78.5px,#ffc32e 95.5px,#ff8d20 118.5px,#ff5e15 150.5px,#ff350a 198.5px,#ff1101 275.5px,#ff0d00 289.5px)"></i>
<i style="top:58px;left:131px;width:310px;background:linear-gradient(90deg,#00ff46 0.5px,#07ff46 5.5px,#71ff45 40.5px,#ddff45 69.5px,#ff4 77.5px,#ffc534 93.5px,#ff9026 115.5px,#ff6119 146.5px,#ff370d 193.5px,#ff1303 267.5px,#ff0600 309.5px)"></i>
<i style="top:60px;left:131px;width:331px;background:linear-gradient(90deg,#00ff4c 0.5px,#06ff4c 5.5px,#70ff4b 40.5px,#deff4b 69.5px,#fffe4b 77.5px,#ffc43a 93.5px,#ff8f2a 115.5px,#ff601c 146.5px,#ff3610 193.5px,#ff1205 268.5px,#ff0100 330.5px)"></i>
<i style="top:62px;left:131px;width:335px;background:linear-gradient(90deg,#00ff51 0.5px,#03ff51 4.5px,#6dff52 39.5px,#daff52 68.5px,#fffd52 77.5px,#ffc33f 93.5px,#ff8e2e 115.5px,#ff5f20 146.5px,#ff3612 193.5px,#ff1207 268.5px,#ff0001 334.5px)"></i>
<i style="top:64px;left:132px;width:332px;background:linear-gradient(90deg,#00ff57 0.5px,#07ff57 5.5px,#70ff58 39.5px,#dfff59 68.5px,#fffc58 76.5px,#ffc245 92.5px,#ff8d33 114.5px,#ff5f23 145.5px,#ff3515 192.5px,#ff1109 267.5px,#ff0003 331.5px)"></i>
<i style="top:66px;left:132px;width:330px;background:linear-gradient(90deg,#00ff5c 0.5px,#07ff5c 5.5px,#70ff5e 39.5px,#dfff60 68.5px,#feff61 75.5px,#ffc14a 92.5px,#ff8c37 114.5px,#ff5e26 145.5px,#ff3417 192.5px,#ff110a 267.5px,#ff0004 329.5px)"></i>
<i style="top:68px;left:132px;width:328px;background:linear-gradient(90deg,#00ff62 0.5px,#03ff62 4.5px,#6cff64 38.5px,#dcff67 67.5px,#ffff68 75.5px,#ffc351 91.5px,#ff8e3c 113.5px,#ff5e2a 144.5px,#ff351a 190.5px,#ff110d 264.5px,#ff0006 327.5px)"></i>
<i style="top:70px;left:133px;width:325px;background:linear-gradient(90deg,#00ff67 0.5px,#05ff68 4.5px,#6cff6b 37.5px,#d8ff6e 65.5px,#fffe6f 74.5px,#ffc257 90.5px,#ff8d41 112.5px,#ff5d2e 143.5px,#ff341d 189.5px,#ff110e 263.5px,#ff0007 324.5px)"></i>
<i style="top:72px;left:133px;width:323px;background:linear-gradient(90deg,#00ff6d 0.5px,#07ff6e 5.5px,#6fff72 38.5px,#ddff76 66.5px,#fffd76 74.5px,#ffc45e 89.5px,#ff9047 110.5px,#ff6033 140.5px,#ff3621 185.5px,#ff1311 256.5px,#ff0009 322.5px)"></i>
<i style="top:74px;left:133px;width:321px;background:linear-gradient(90deg,#00ff73 0.5px,#03ff74 4.5px,#6bff78 37.5px,#d9ff7d 65.5px,#fffc7d 74.5px,#ffc464 89.5px,#ff8f4c 110.5px,#ff5f36 140.5px,#ff3623 185.5px,#ff1213 257.5px,#ff000b 320.5px)"></i>
<i style="top:76px;left:134px;width:318px;background:linear-gradient(90deg,#00ff79 0.5px,#05ff7a 4.5px,#6fff7f 37.5px,#deff85 65.5px,#feff86 72.5px,#ffc068 89.5px,#ff8c4f 110.5px,#ff5d39 140.5px,#ff3426 185.5px,#ff1115 257.5px,#ff000d 317.5px)"></i>
<i style="top:78px;left:134px;width:316px;background:linear-gradient(90deg,#00ff7f 0.5px,#07ff80 5.5px,#6eff86 37.5px,#daff8c 64.5px,#ffff8e 72.5px,#ffc571 87.5px,#ff8f56 108.5px,#ff5f3e 138.5px,#ff3629 182.5px,#ff1217 253.5px,#ff000e 315.5px)"></i>
<i style="top:80px;left:134px;width:314px;background:linear-gradient(90deg,#00ff85 0.5px,#03ff86 4.5px,#6aff8d 36.5px,#d6ff94 63.5px,#fffe96 72.5px,#ffc477 87.5px,#ff8e5b 108.5px,#ff5f42 137.5px,#ff362d 181.5px,#ff121a 251.5px,#ff0010 313.5px)"></i>
<i style="top:82px;left:135px;width:311px;background:linear-gradient(90deg,#00ff8c 0.5px,#05ff8c 4.5px,#6eff94 36.5px,#dbff9c 63.5px,#fffd9d 71.5px,#ffc37d 86.5px,#ff8f61 106.5px,#ff6047 135.5px,#ff3630 178.5px,#ff121c 247.5px,#ff0012 310.5px)"></i>
<i style="top:84px;left:135px;width:310px;background:linear-gradient(90deg,#00ff92 0.5px,#07ff93 5.5px,#71ff9b 37.5px,#e0ffa4 64.5px,#fffda5 71.5px,#ffc283 86.5px,#ff8e66 106.5px,#ff5f4b 135.5px,#ff3633 178.5px,#ff121e 247.5px,#ff0014 309.5px)"></i>
<i style="top:86px;left:135px;width:308px;background:linear-gradient(90deg,#00ff98 0.5px,#03ff99 4.5px,#6dffa2 36.5px,#ddffac 63.5px,#fffcad 71.5px,#ffc18a 86.5px,#ff8d6b 106.5px,#ff5e4e 135.5px,#ff3536 178.5px,#ff1120 247.5px,#ff0015 307.5px)"></i>
<i style="top:88px;left:136px;width:305px;background:linear-gradient(90deg,#00ff9f 0.5px,#05ffa0 4.5px,#6dffaa 35.5px,#ddffb4 62.5px,#feffb7 69.5px,#ffc392 84.5px,#ff8e71 104.5px,#ff5f53 133.5px,#ff3539 176.5px,#f12 245.5px,#ff0017 304.5px)"></i>
<i style="top:90px;left:136px;width:303px;background:linear-gradient(90deg,#00ffa5 0.5px,#05ffa7 4.5px,#6dffb1 35.5px,#d9ffbc 61.5px,#ffffc0 69.5px,#ffc69b 83.5px,#ff9077 103.5px,#ff6059 131.5px,#ff363d 173.5px,#ff1226 240.5px,#ff0019 302.5px)"></i>
<i style="top:92px;left:136px;width:301px;background:linear-gradient(90deg,#00ffac 0.5px,#04ffad 4.5px,#6cffb9 35.5px,#daffc5 61.5px,#fffec8 69.5px,#ffc5a1 83.5px,#ff8f7c 103.5px,#ff5f5c 131.5px,#ff3640 173.5px,#ff1228 240.5px,#ff001b 300.5px)"></i>
<i style="top:94px;left:137px;width:298px;background:linear-gradient(90deg,#00ffb3 0.5px,#06ffb5 4.5px,#6cffc0 34.5px,#daffcd 60.5px,#fffdd0 68.5px,#ffc4a8 82.5px,#ff9083 101.5px,#ff6061 129.5px,#ff3644 170.5px,#ff122b 236.5px,#ff001d 297.5px)"></i>
<i style="top:96px;left:137px;width:296px;background:linear-gradient(90deg,#00ffba 0.5px,#05ffbb 4.5px,#6cffc8 34.5px,#dbffd6 60.5px,#fffcd8 68.5px,#ffc3ae 82.5px,#ff8f88 101.5px,#ff5f65 129.5px,#ff3647 170.5px,#ff122d 236.5px,#ff001f 295.5px)"></i>
<i style="top:98px;left:137px;width:294px;background:linear-gradient(90deg,#00ffc1 0.5px,#04ffc2 4.5px,#6cffd0 34.5px,#dcffdf 60.5px,#feffe4 67.5px,#ffc2b5 82.5px,#ff8e8e 101.5px,#ff5e69 129.5px,#ff3449 171.5px,#ff102e 238.5px,#ff0021 293.5px)"></i>
<i style="top:100px;left:138px;width:291px;background:linear-gradient(90deg,#00ffc8 0.5px,#06ffca 4.5px,#6fffd9 34.5px,#dcffe8 59.5px,#ffffed 66.5px,#ffc4be 80.5px,#ff8f95 99.5px,#ff606f 126.5px,#ff364f 166.5px,#ff1332 230.5px,#ff0023 290.5px)"></i>
<i style="top:102px;left:138px;width:289px;background:linear-gradient(90deg,#00ffcf 0.5px,#05ffd1 4.5px,#6fffe1 34.5px,#ddfff1 59.5px,#fffef6 66.5px,#ffc3c5 80.5px,#ff8e9a 99.5px,#ff5f74 126.5px,#ff3652 166.5px,#ff1235 230.5px,#ff0025 288.5px)"></i>
<i style="top:104px;left:138px;width:287px;background:linear-gradient(90deg,#00ffd7 0.5px,#04ffd9 4.5px,#6bffe9 33.5px,#d9fffa 58.5px,#fffdfe 66.5px,#ffc2cc 80.5px,#ff8da0 99.5px,#ff5e78 126.5px,#ff3454 167.5px,#ff1136 232.5px,#ff0028 286.5px)"></i>
<i style="top:106px;left:139px;width:284px;background:linear-gradient(90deg,#00ffdf 0.5px,#03ffe0 3.5px,#6afff1 32.5px,#d1fbff 56.5px,#fff2fe 67.5px,#ffbacd 81.5px,#ff869f 101.5px,#ff5877 129.5px,#ff2f54 172.5px,#ff0c35 241.5px,#ff002a 283.5px)"></i>
<i style="top:108px;left:139px;width:282px;background:linear-gradient(90deg,#00ffe6 0.5px,#05ffe8 4.5px,#6efffb 33.5px,#b6f6ff 51.5px,#ffe8ff 69.5px,#ffafcc 84.5px,#ff7c9d 105.5px,#ff5075 135.5px,#ff2851 181.5px,#ff0732 256.5px,#ff002c 281.5px)"></i>
<i style="top:110px;left:139px;width:280px;background:linear-gradient(90deg,#0fe 0.5px,#04fff0 4.5px,#68fbff 32.5px,#ffdeff 71.5px,#ffa6ca 87.5px,#ff749c 109.5px,#ff4872 141.5px,#ff214e 191.5px,#ff012f 274.5px,#ff002e 279.5px)"></i>
<i style="top:112px;left:140px;width:277px;background:linear-gradient(90deg,#00fff6 0.5px,#03fff8 3.5px,#41faff 21.5px,#ffd4ff 72.5px,#ff9fcb 88.5px,#ff6e9c 111.5px,#ff4271 145.5px,#ff1c4d 198.5px,#ff0030 276.5px)"></i>
<i style="top:114px;left:140px;width:275px;background:linear-gradient(90deg,#00fffe 0.5px,#05feff 4.5px,#c2d8ff 58.5px,#ffcbff 74.5px,#ff96ca 91.5px,#ff669a 115.5px,#ff3c6f 151.5px,#ff174a 208.5px,#f03 274.5px)"></i>
<i style="top:116px;left:140px;width:273px;background:linear-gradient(90deg,#00f9ff 0.5px,#04f6ff 4.5px,#c0d0ff 59.5px,#ffc2ff 76.5px,#ff8ec8 94.5px,#ff5f98 119.5px,#ff376e 156.5px,#ff1349 215.5px,#ff0035 272.5px)"></i>
<i style="top:118px;left:141px;width:270px;background:linear-gradient(90deg,#00f0ff 0.5px,#03efff 3.5px,#c2c7ff 60.5px,#ffbaff 77.5px,#ff88c9 95.5px,#ff5c9a 120.5px,#ff336f 158.5px,#ff114a 217.5px,#ff0038 269.5px)"></i>
<i style="top:120px;left:141px;width:268px;background:linear-gradient(90deg,#00e9ff 0.5px,#05e7ff 4.5px,#c3bfff 62.5px,#ffb2ff 79.5px,#ff82ca 97.5px,#ff569a 123.5px,#ff3070 161.5px,#ff0f4b 221.5px,#ff003a 267.5px)"></i>
<i style="top:122px;left:141px;width:266px;background:linear-gradient(90deg,#00e3ff 0.5px,#04e0ff 4.5px,#c1b8ff 63.5px,#ffabff 81.5px,#ff7bc9 100.5px,#ff5098 127.5px,#ff2b6e 167.5px,#ff0b49 230.5px,#ff003d 265.5px)"></i>
<i style="top:124px;left:141px;width:264px;background:linear-gradient(90deg,#00dcff 0.5px,#03daff 4.5px,#bfb1ff 64.5px,#ffa4ff 83.5px,#ff76ca 102.5px,#ff4d9a 129.5px,#ff296f 169.5px,#ff094b 232.5px,#ff003f 263.5px)"></i>
<i style="top:126px;left:142px;width:261px;background:linear-gradient(90deg,#00d5ff 0.5px,#05d3ff 4.5px,#c3aaff 66.5px,#ff9dff 84.5px,#ff6fc8 104.5px,#ff4798 132.5px,#ff246e 174.5px,#ff0649 240.5px,#ff0042 260.5px)"></i>
<i style="top:128px;left:142px;width:259px;background:linear-gradient(90deg,#00cfff 0.5px,#07ccff 5.5px,#c4a3ff 68.5px,#ff96ff 86.5px,#ff6bc9 106.5px,#ff449a 134.5px,#ff226f 176.5px,#ff044a 242.5px,#f04 258.5px)"></i>
<i style="top:130px;left:142px;width:257px;background:linear-gradient(90deg,#00caff 0.5px,#03c7ff 4.5px,#bf9eff 68.5px,#ff90ff 88.5px,#ff66ca 108.5px,#ff409a 137.5px,#ff1f6f 180.5px,#ff024a 248.5px,#ff0047 256.5px)"></i>
<i style="top:132px;left:143px;width:254px;background:linear-gradient(90deg,#00c4ff 0.5px,#07c1ff 5.5px,#c397ff 70.5px,#ff89ff 89.5px,#ff60c9 110.5px,#ff3b98 140.5px,#ff1b6e 184.5px,#ff004a 253.5px)"></i>
<i style="top:134px;left:143px;width:253px;background:linear-gradient(90deg,#00beff 0.5px,#06bbff 5.5px,#c491ff 72.5px,#ff81fc 92.5px,#ff59c6 114.5px,#ff3696 145.5px,#ff176c 191.5px,#ff004c 252.5px)"></i>
<i style="top:136px;left:143px;width:251px;background:linear-gradient(90deg,#00b9ff 0.5px,#03b7ff 4.5px,#c08cff 72.5px,#ff7cfc 94.5px,#ff55c7 116.5px,#ff3397 147.5px,#ff156d 193.5px,#ff004f 250.5px)"></i>
<i style="top:138px;left:144px;width:248px;background:linear-gradient(90deg,#00b4ff 0.5px,#07b1ff 5.5px,#c486ff 74.5px,#ff76fc 95.5px,#ff52c7 117.5px,#ff3097 149.5px,#ff126d 196.5px,#ff0052 247.5px)"></i>
<i style="top:140px;left:144px;width:246px;background:linear-gradient(90deg,#00afff 0.5px,#06acff 5.5px,#c580ff 76.5px,#ff71fc 97.5px,#ff4dc6 120.5px,#ff2c96 153.5px,#ff0f6c 202.5px,#f05 245.5px)"></i>
<i style="top:142px;left:144px;width:244px;background:linear-gradient(90deg,#00abff 0.5px,#05a8ff 5.5px,#c37cff 77.5px,#ff6cfc 99.5px,#ff49c7 122.5px,#ff2997 155.5px,#ff0d6d 204.5px,#ff0058 243.5px)"></i>
<i style="top:144px;left:145px;width:241px;background:linear-gradient(90deg,#00a6ff 0.5px,#07a3ff 5.5px,#c477ff 78.5px,#ff67fc 100.5px,#ff44c6 124.5px,#ff2596 158.5px,#ff0a6c 208.5px,#ff005b 240.5px)"></i>
<i style="top:146px;left:145px;width:239px;background:linear-gradient(90deg,#00a1ff 0.5px,#069fff 5.5px,#c273ff 79.5px,#ff63fc 102.5px,#ff41c7 126.5px,#ff2397 160.5px,#ff096d 211.5px,#ff005e 238.5px)"></i>
<i style="top:148px;left:145px;width:237px;background:linear-gradient(90deg,#009dff 0.5px,#059bff 5.5px,#c36eff 81.5px,#ff5efc 104.5px,#ff3ec8 128.5px,#ff2097 163.5px,#ff066d 215.5px,#ff0061 236.5px)"></i>
<i style="top:150px;left:146px;width:234px;background:linear-gradient(90deg,#09f 0.5px,#0996ff 6.5px,#c769ff 83.5px,#ff5afd 105.5px,#ff3ac7 130.5px,#ff1e97 165.5px,#ff046d 218.5px,#ff0064 233.5px)"></i>
<i style="top:152px;left:146px;width:232px;background:linear-gradient(90deg,#0095ff 0.5px,#0892ff 6.5px,#c565ff 84.5px,#ff56fd 107.5px,#ff37c8 132.5px,#ff1b97 168.5px,#ff036d 221.5px,#ff0067 231.5px)"></i>
<i style="top:154px;left:146px;width:230px;background:linear-gradient(90deg,#0091ff 0.5px,#058fff 5.5px,#c361ff 85.5px,#ff51fd 109.5px,#ff33c7 135.5px,#ff1896 172.5px,#ff006c 227.5px,#ff006b 229.5px)"></i>
<i style="top:156px;left:147px;width:227px;background:linear-gradient(90deg,#008dff 0.5px,#088aff 6.5px,#c75cff 87.5px,#ff4dfd 110.5px,#ff30c7 136.5px,#ff1697 173.5px,#ff006e 226.5px)"></i>
<i style="top:158px;left:147px;width:225px;background:linear-gradient(90deg,#008aff 0.5px,#0887ff 6.5px,#c559ff 88.5px,#ff4afd 112.5px,#ff2dc6 139.5px,#ff1396 177.5px,#ff0072 224.5px)"></i>
<i style="top:160px;left:147px;width:223px;background:linear-gradient(90deg,#0086ff 0.5px,#0584ff 5.5px,#c156ff 88.5px,#ff46fd 114.5px,#ff2ac7 141.5px,#ff1197 179.5px,#ff0075 222.5px)"></i>
<i style="top:162px;left:148px;width:220px;background:linear-gradient(90deg,#0083ff 0.5px,#0a7fff 7.5px,#c751ff 91.5px,#ff42fd 115.5px,#ff27c8 142.5px,#ff0f97 181.5px,#ff0079 219.5px)"></i>
<i style="top:164px;left:148px;width:218px;background:linear-gradient(90deg,#0080ff 0.5px,#097cff 7.5px,#c84dff 93.5px,#ff3ffd 117.5px,#ff24c7 145.5px,#ff0c96 185.5px,#ff007d 217.5px)"></i>
<i style="top:166px;left:148px;width:216px;background:linear-gradient(90deg,#007dff 0.5px,#077aff 6.5px,#c44bff 93.5px,#ff3bfd 119.5px,#ff22c8 147.5px,#ff0a97 187.5px,#ff0080 215.5px)"></i>
<i style="top:168px;left:149px;width:213px;background:linear-gradient(90deg,#0079ff 0.5px,#0c75ff 8.5px,#c946ff 96.5px,#ff38fd 120.5px,#ff1ec7 149.5px,#ff0896 190.5px,#ff0084 212.5px)"></i>
<i style="top:170px;left:149px;width:211px;background:linear-gradient(90deg,#0076ff 0.5px,#0973ff 7.5px,#c843ff 97.5px,#ff35fd 122.5px,#ff1cc7 151.5px,#ff0697 192.5px,#f08 210.5px)"></i>
<i style="top:172px;left:149px;width:209px;background:linear-gradient(90deg,#0074ff 0.5px,#0671ff 6.5px,#c441ff 97.5px,#ff32fd 124.5px,#ff1ac8 153.5px,#ff0497 195.5px,#ff008c 208.5px)"></i>
<i style="top:174px;left:150px;width:206px;background:linear-gradient(90deg,#0070ff 0.5px,#0d6cff 9.5px,#cb3cff 101.5px,#ff2ffd 125.5px,#ff17c7 155.5px,#ff0297 197.5px,#ff0091 205.5px)"></i>
<i style="top:176px;left:150px;width:204px;background:linear-gradient(90deg,#006eff 0.5px,#0b6aff 8.5px,#c83aff 101.5px,#ff2cfd 127.5px,#ff15c8 157.5px,#ff0097 200.5px,#ff0095 203.5px)"></i>
<i style="top:178px;left:150px;width:202px;background:linear-gradient(90deg,#006bff 0.5px,#0868ff 7.5px,#c638ff 102.5px,#ff29fd 129.5px,#ff12c7 160.5px,#f09 201.5px)"></i>
<i style="top:180px;left:151px;width:199px;background:linear-gradient(90deg,#0068ff 0.5px,#0f64ff 10.5px,#cd33ff 106.5px,#ff26fd 130.5px,#ff10c8 161.5px,#ff009e 198.5px)"></i>
<i style="top:182px;left:151px;width:198px;background:linear-gradient(90deg,#06f 0.5px,#0c62ff 9.5px,#ca31ff 106.5px,#ff23fd 132.5px,#ff0ec8 163.5px,#ff00a1 197.5px)"></i>
<i style="top:184px;left:151px;width:196px;background:linear-gradient(90deg,#0063ff 0.5px,#0860ff 7.5px,#c630ff 106.5px,#ff21fd 134.5px,#ff0cc7 166.5px,#ff00a6 195.5px)"></i>
<i style="top:186px;left:152px;width:193px;background:linear-gradient(90deg,#0061ff 0.5px,#125bff 12.5px,#cf2bff 111.5px,#ff1efd 135.5px,#ff0ac8 167.5px,#ff00ab 192.5px)"></i>
<i style="top:188px;left:152px;width:191px;background:linear-gradient(90deg,#005eff 0.5px,#0d5aff 10.5px,#cc29ff 111.5px,#ff1bfd 137.5px,#ff08c7 170.5px,#ff00b0 190.5px)"></i>
<i style="top:190px;left:152px;width:189px;background:linear-gradient(90deg,#005cff 0.5px,#0959ff 8.5px,#c628ff 110.5px,#ff19fd 139.5px,#ff06c8 172.5px,#ff00b5 188.5px)"></i>
<i style="top:192px;left:152px;width:187px;background:linear-gradient(90deg,#005aff 0.5px,#0757ff 7.5px,#c526ff 111.5px,#ff17fe 141.5px,#ff04c7 175.5px,#ff00ba 186.5px)"></i>
<i style="top:194px;left:153px;width:184px;background:linear-gradient(90deg,#0058ff 0.5px,#1052ff 12.5px,#cf21ff 117.5px,#ff14fe 142.5px,#ff02c8 176.5px,#ff00bf 183.5px)"></i>
<i style="top:196px;left:153px;width:182px;background:linear-gradient(90deg,#0056ff 0.5px,#0b52ff 9.5px,#c821ff 115.5px,#ff12fe 144.5px,#ff00c8 178.5px,#ff00c4 181.5px)"></i>
<i style="top:198px;left:153px;width:180px;background:linear-gradient(90deg,#0054ff 0.5px,#0751ff 7.5px,#c51fff 115.5px,#ff10fe 146.5px,#ff00ca 179.5px)"></i>
<i style="top:200px;left:154px;width:177px;background:linear-gradient(90deg,#0051ff 0.5px,#134bff 14.5px,#d11aff 122.5px,#ff0dfc 148.5px,#ff00d0 176.5px)"></i>
<i style="top:202px;left:154px;width:175px;background:linear-gradient(90deg,#0050ff 0.5px,#0c4bff 10.5px,#ca1aff 120.5px,#ff0bfc 150.5px,#ff00d5 174.5px)"></i>
<i style="top:204px;left:154px;width:173px;background:linear-gradient(90deg,#004eff 0.5px,#084aff 8.5px,#c519ff 119.5px,#ff09fc 152.5px,#ff00db 172.5px)"></i>
<i style="top:206px;left:155px;width:170px;background:linear-gradient(90deg,#004cff 0.5px,#1744ff 17.5px,#d612ff 129.5px,#ff07fc 153.5px,#ff00e2 169.5px)"></i>
<i style="top:208px;left:155px;width:168px;background:linear-gradient(90deg,#004aff 0.5px,#0d45ff 11.5px,#cc13ff 125.5px,#ff05fc 155.5px,#ff00e8 167.5px)"></i>
<i style="top:210px;left:155px;width:166px;background:linear-gradient(90deg,#0048ff 0.5px,#0944ff 9.5px,#c712ff 124.5px,#ff03fc 157.5px,#f0e 165.5px)"></i>
<i style="top:212px;left:156px;width:163px;background:linear-gradient(90deg,#0046ff 0.5px,#1e3dff 22.5px,#dd0bff 137.5px,#ff01fc 158.5px,#ff00f5 162.5px)"></i>
<i style="top:214px;left:156px;width:161px;background:linear-gradient(90deg,#04f 0.5px,#103fff 13.5px,#cd0dff 130.5px,#ff00fc 160.5px)"></i>
<i style="top:216px;left:156px;width:159px;background:linear-gradient(90deg,#0043ff 0.5px,#093fff 9.5px,#c70dff 128.5px,#fb00ff 158.5px)"></i>
<i style="top:218px;left:157px;width:156px;background:linear-gradient(90deg,#0041ff 0.5px,#2b35ff 31.5px,#ea02ff 149.5px,#f400ff 155.5px)"></i>
<i style="top:220px;left:157px;width:154px;background:linear-gradient(90deg,#003fff 0.5px,#123aff 15.5px,#d007ff 136.5px,#ed00ff 153.5px)"></i>
<i style="top:222px;left:157px;width:152px;background:linear-gradient(90deg,#003eff 0.5px,#0a3aff 10.5px,#c907ff 133.5px,#e700ff 151.5px)"></i>
<i style="top:224px;left:158px;width:149px;background:linear-gradient(90deg,#003cff 0.5px,#402aff 46.5px,#e000ff 148.5px)"></i>
<i style="top:226px;left:158px;width:147px;background:linear-gradient(90deg,#003bff 0.5px,#1634ff 18.5px,#d500ff 143.5px,#da00ff 146.5px)"></i>
<i style="top:228px;left:158px;width:145px;background:linear-gradient(90deg,#0039ff 0.5px,#0d35ff 12.5px,#ca02ff 138.5px,#d400ff 144.5px)"></i>
<i style="top:230px;left:159px;width:143px;background:linear-gradient(90deg,#0038ff 0.5px,#641cff 72.5px,#d000ff 142.5px)"></i>
<i style="top:232px;left:159px;width:141px;background:linear-gradient(90deg,#0036ff 0.5px,#1c2eff 23.5px,#ca00ff 140.5px)"></i>
<i style="top:234px;left:159px;width:139px;background:linear-gradient(90deg,#0035ff 0.5px,#0e30ff 13.5px,#c400ff 138.5px)"></i>
<i style="top:236px;left:160px;width:136px;background:linear-gradient(90deg,#03f 0.5px,#7114ff 83.5px,#be00ff 135.5px)"></i>
<i style="top:238px;left:160px;width:134px;background:linear-gradient(90deg,#0032ff 0.5px,#2826ff 32.5px,#b900ff 133.5px)"></i>
<i style="top:240px;left:160px;width:132px;background:linear-gradient(90deg,#0031ff 0.5px,#122bff 16.5px,#b400ff 131.5px)"></i>
<i style="top:242px;left:161px;width:129px;background:linear-gradient(90deg,#002fff 0.5px,#780eff 90.5px,#ae00ff 128.5px)"></i>
<i style="top:244px;left:161px;width:127px;background:linear-gradient(90deg,#002eff 0.5px,#3a1dff 46.5px,#a900ff 126.5px)"></i>
<i style="top:246px;left:161px;width:125px;background:linear-gradient(90deg,#002dff 0.5px,#1526ff 19.5px,#a400ff 124.5px)"></i>
<i style="top:248px;left:162px;width:122px;background:linear-gradient(90deg,#002bff 0.5px,#7e08ff 97.5px,#9f00ff 121.5px)"></i>
<i style="top:250px;left:162px;width:120px;background:linear-gradient(90deg,#002aff 0.5px,#5d10ff 74.5px,#9b00ff 119.5px)"></i>
<i style="top:252px;left:162px;width:118px;background:linear-gradient(90deg,#0029ff 0.5px,#1b21ff 24.5px,#9600ff 117.5px)"></i>
<i style="top:254px;left:163px;width:115px;background:linear-gradient(90deg,#0028ff 0.5px,#8303ff 103.5px,#9100ff 114.5px)"></i>
<i style="top:256px;left:163px;width:113px;background:linear-gradient(90deg,#0027ff 0.5px,#6e08ff 89.5px,#8d00ff 112.5px)"></i>
<i style="top:258px;left:163px;width:111px;background:linear-gradient(90deg,#0026ff 0.5px,#241bff 32.5px,#8900ff 110.5px)"></i>
<i style="top:260px;left:163px;width:109px;background:linear-gradient(90deg,#0025ff 0.5px,#111fff 17.5px,#8400ff 108.5px)"></i>
<i style="top:262px;left:164px;width:106px;background:linear-gradient(90deg,#0023ff 0.5px,#7602ff 97.5px,#8000ff 105.5px)"></i>
<i style="top:264px;left:164px;width:104px;background:linear-gradient(90deg,#02f 0.5px,#3413ff 46.5px,#7c00ff 103.5px)"></i>
<i style="top:266px;left:164px;width:102px;background:linear-gradient(90deg,#0021ff 0.5px,#141bff 20.5px,#7800ff 101.5px)"></i>
<i style="top:268px;left:165px;width:99px;background:linear-gradient(90deg,#0020ff 0.5px,#7400ff 98.5px)"></i>
<i style="top:270px;left:165px;width:97px;background:linear-gradient(90deg,#001fff 0.5px,#5208ff 72.5px,#7000ff 96.5px)"></i>
<i style="top:272px;left:165px;width:95px;background:linear-gradient(90deg,#001eff 0.5px,#1916ff 25.5px,#6c00ff 94.5px)"></i>
<i style="top:274px;left:166px;width:92px;background:linear-gradient(90deg,#001dff 0.5px,#6800ff 91.5px)"></i>
<i style="top:276px;left:166px;width:90px;background:linear-gradient(90deg,#001cff 0.5px,#6500ff 89.5px)"></i>
<i style="top:278px;left:166px;width:89px;background:linear-gradient(90deg,#001bff 0.5px,#2111ff 32.5px,#6200ff 88.5px)"></i>
<i style="top:280px;left:167px;width:86px;background:linear-gradient(90deg,#001aff 0.5px,#5f00ff 85.5px)"></i>
<i style="top:282px;left:167px;width:84px;background:linear-gradient(90deg,#0019ff 0.5px,#5b00ff 83.5px)"></i>
<i style="top:284px;left:167px;width:82px;background:linear-gradient(90deg,#0019ff 0.5px,#300aff 46.5px,#5800ff 81.5px)"></i>
<i style="top:286px;left:168px;width:79px;background:linear-gradient(90deg,#0018ff 0.5px,#5400ff 78.5px)"></i>
<i style="top:288px;left:168px;width:77px;background:linear-gradient(90deg,#0017ff 0.5px,#5100ff 76.5px)"></i>
<i style="top:290px;left:168px;width:75px;background:linear-gradient(90deg,#0016ff 0.5px,#4b00ff 71.5px,#4e00ff 74.5px)"></i>
<i style="top:292px;left:169px;width:72px;background:linear-gradient(90deg,#0015ff 0.5px,#4b00ff 71.5px)"></i>
<i style="top:294px;left:169px;width:70px;background:linear-gradient(90deg,#0014ff 0.5px,#4800ff 69.5px)"></i>
<i style="top:296px;left:169px;width:68px;background:linear-gradient(90deg,#0013ff 0.5px,#40f 67.5px)"></i>
<i style="top:298px;left:170px;width:65px;background:linear-gradient(90deg,#0012ff 0.5px,#4100ff 64.5px)"></i>
<i style="top:300px;left:170px;width:63px;background:linear-gradient(90deg,#0012ff 0.5px,#3e00ff 62.5px)"></i>
<i style="top:302px;left:170px;width:61px;background:linear-gradient(90deg,#01f 0.5px,#3c00ff 60.5px)"></i>
<i style="top:304px;left:171px;width:58px;background:linear-gradient(90deg,#0010ff 0.5px,#3900ff 57.5px)"></i>
<i style="top:306px;left:171px;width:56px;background:linear-gradient(90deg,#000fff 0.5px,#3600ff 55.5px)"></i>
<i style="top:308px;left:171px;width:54px;background:linear-gradient(90deg,#000fff 0.5px,#30f 53.5px)"></i>
<i style="top:310px;left:172px;width:51px;background:linear-gradient(90deg,#000eff 0.5px,#3000ff 50.5px)"></i>
<i style="top:312px;left:172px;width:49px;background:linear-gradient(90deg,#000dff 0.5px,#2e00ff 48.5px)"></i>
<i style="top:314px;left:172px;width:47px;background:linear-gradient(90deg,#000cff 0.5px,#2b00ff 46.5px)"></i>
<i style="top:316px;left:173px;width:44px;background:linear-gradient(90deg,#000bff 0.5px,#2800ff 43.5px)"></i>
<i style="top:318px;left:173px;width:42px;background:linear-gradient(90deg,#000bff 0.5px,#2600ff 41.5px)"></i>
<i style="top:320px;left:173px;width:40px;background:linear-gradient(90deg,#000aff 0.5px,#2300ff 39.5px)"></i>
<i style="top:322px;left:174px;width:37px;background:linear-gradient(90deg,#0009ff 0.5px,#2100ff 36.5px)"></i>
<i style="top:324px;left:174px;width:35px;background:linear-gradient(90deg,#0009ff 0.5px,#1e00ff 34.5px)"></i>
<i style="top:326px;left:174px;width:34px;background:linear-gradient(90deg,#0008ff 0.5px,#1d00ff 33.5px)"></i>
<i style="top:328px;left:174px;width:32px;background:linear-gradient(90deg,#0008ff 0.5px,#1a00ff 31.5px)"></i>
<i style="top:330px;left:175px;width:29px;background:linear-gradient(90deg,#0007ff 0.5px,#1800ff 28.5px)"></i>
<i style="top:332px;left:175px;width:27px;background:linear-gradient(90deg,#0006ff 0.5px,#1600ff 26.5px)"></i>
<i style="top:334px;left:175px;width:25px;background:linear-gradient(90deg,#0006ff 0.5px,#1300ff 24.5px)"></i>
<i style="top:336px;left:176px;width:22px;background:linear-gradient(90deg,#0005ff 0.5px,#10f 21.5px)"></i>
<i style="top:338px;left:176px;width:20px;background:linear-gradient(90deg,#0004ff 0.5px,#0f00ff 19.5px)"></i>
<i style="top:340px;left:176px;width:18px;background:linear-gradient(90deg,#0004ff 0.5px,#0d00ff 17.5px)"></i>
<i style="top:342px;left:177px;width:15px;background:linear-gradient(90deg,#0003ff 0.5px,#0a00ff 14.5px)"></i>
<i style="top:344px;left:177px;width:13px;background:linear-gradient(90deg,#0002ff 0.5px,#0800ff 12.5px)"></i>
<i style="top:346px;left:177px;width:11px;background:linear-gradient(90deg,#0002ff 0.5px,#0600ff 10.5px)"></i>
<i style="top:348px;left:178px;width:8px;background:linear-gradient(90deg,#0001ff 0.5px,#0400ff 7.5px)"></i>
</div></div>
<div id="xy">
<i style="top:0px;background:linear-gradient(90deg,#5fffbf 0.5px,#d2ffb9 193.5px,#fffcb4 264.5px,#ffd495 329.5px)"></i>
<i style="top:3px;background:linear-gradient(90deg,#61ffc1 0.5px,#d3ffbb 192.5px,#fffcb6 261.5px,#ffd295 329.5px)"></i>
<i style="top:6px;background:linear-gradient(90deg,#62ffc3 0.5px,#d4ffbd 191.5px,#fffcb8 257.5px,#ffd196 329.5px)"></i>
<i style="top:9px;background:linear-gradient(90deg,#63ffc5 0.5px,#d5ffbf 190.5px,#fffcba 254.5px,#ffcf96 329.5px)"></i>
<i style="top:12px;background:linear-gradient(90deg,#64ffc6 0.5px,#d6ffc1 189.5px,#fffcbc 251.5px,#ffcd97 329.5px)"></i>
<i style="top:15px;background:linear-gradient(90deg,#65ffc8 0.5px,#d8ffc3 188.5px,#fffcbe 248.5px,#ffcb97 329.5px)"></i>
<i style="top:18px;background:linear-gradient(90deg,#66ffca 0.5px,#d9ffc5 187.5px,#fffcc0 245.5px,#ffca97 329.5px)"></i>
<i style="top:21px;background:linear-gradient(90deg,#68ffcc 0.5px,#daffc7 186.5px,#fffcc3 242.5px,#ffc898 329.5px)"></i>
<i style="top:24px;background:linear-gradient(90deg,#69ffce 0.5px,#dcffc9 185.5px,#fffcc5 239.5px,#ffc698 329.5px)"></i>
<i style="top:27px;background:linear-gradient(90deg,#6affd0 0.5px,#ddffcb 184.5px,#fffcc7 236.5px,#ffc599 329.5px)"></i>
<i style="top:30px;background:linear-gradient(90deg,#6bffd2 0.5px,#deffcd 183.5px,#fffcc9 233.5px,#ffc399 329.5px)"></i>
<i style="top:33px;background:linear-gradient(90deg,#6dffd4 0.5px,#e0ffcf 182.5px,#fffccb 230.5px,#ffc19a 329.5px)"></i>
<i style="top:36px;background:linear-gradient(90deg,#6effd6 0.5px,#e1ffd1 181.5px,#fffccd 227.5px,#ffc19b 326.5px,#ffbf9a 329.5px)"></i>
<i style="top:39px;background:linear-gradient(90deg,#6fffd8 0.5px,#e2ffd3 180.5px,#fffcd0 223.5px,#ffc29e 321.5px,#ffbe9a 329.5px)"></i>
<i style="top:42px;background:linear-gradient(90deg,#70ffda 0.5px,#e4ffd6 179.5px,#fffcd2 220.5px,#ffc19f 318.5px,#ffbc9b 329.5px)"></i>
<i style="top:45px;background:linear-gradient(90deg,#72ffdc 0.5px,#e5ffd8 178.5px,#fffcd5 217.5px,#ffc1a1 315.5px,#ffba9b 329.5px)"></i>
<i style="top:48px;background:linear-gradient(90deg,#73ffde 0.5px,#e7ffda 177.5px,#fffcd7 214.5px,#ffc1a3 311.5px,#ffb99c 329.5px)"></i>
<i style="top:51px;background:linear-gradient(90deg,#74ffe0 0.5px,#e8ffdc 176.5px,#fffcd9 211.5px,#ffc1a5 308.5px,#ffb79c 329.5px)"></i>
<i style="top:54px;background:linear-gradient(90deg,#76ffe2 0.5px,#e9ffdf 175.5px,#fffcdb 208.5px,#ffc1a7 305.5px,#ffb69c 329.5px)"></i>
<i style="top:57px;background:linear-gradient(90deg,#77ffe4 0.5px,#ebffe1 174.5px,#fffcde 205.5px,#ffc1a9 301.5px,#ffb49d 329.5px)"></i>
<i style="top:60px;background:linear-gradient(90deg,#79ffe6 0.5px,#ecffe3 173.5px,#fffce0 202.5px,#ffc1aa 298.5px,#ffb29d 329.5px)"></i>
<i style="top:63px;background:linear-gradient(90deg,#7affe8 0.5px,#eeffe6 172.5px,#fffce2 199.5px,#ffc1ac 295.5px,#ffb19e 329.5px)"></i>
<i style="top:66px;background:linear-gradient(90deg,#7bffea 0.5px,#efffe8 171.5px,#fffce5 196.5px,#ffc1ae 291.5px,#ffaf9e 329.5px)"></i>
<i style="top:69px;background:linear-gradient(90deg,#7dffec 0.5px,#fffce8 192.5px,#ffc1b1 287.5px,#ffae9e 329.5px)"></i>
<i style="top:72px;background:linear-gradient(90deg,#7effef 0.5px,#f2ffed 169.5px,#fffbea 190.5px,#ffc0b2 285.5px,#ffac9f 329.5px)"></i>
<i style="top:75px;background:linear-gradient(90deg,#80fff1 0.5px,#f4fff0 168.5px,#fffbec 187.5px,#ffc1b4 281.5px,#ffaa9f 329.5px)"></i>
<i style="top:78px;background:linear-gradient(90deg,#81fff3 0.5px,#f5fff2 167.5px,#fffbee 185.5px,#ffc0b6 279.5px,#ffa99f 329.5px)"></i>
<i style="top:81px;background:linear-gradient(90deg,#83fff5 0.5px,#f7fff5 166.5px,#fffaf0 182.5px,#ffc0b7 276.5px,#ffa7a0 329.5px)"></i>
<i style="top:84px;background:linear-gradient(90deg,#84fff8 0.5px,#fffdf5 176.5px,#ffc2bc 268.5px,#ffa6a0 329.5px)"></i>
<i style="top:87px;background:linear-gradient(90deg,#86fffa 0.5px,#fafffa 164.5px,#fff7f2 180.5px,#ffbdb9 275.5px,#ffa4a1 329.5px)"></i>
<i style="top:90px;background:linear-gradient(90deg,#87fffc 0.5px,#fffdfa 170.5px,#ffc2c0 262.5px,#ffa3a1 329.5px)"></i>
<i style="top:93px;background:linear-gradient(90deg,#89ffff 0.5px,#fffcfc 167.5px,#ffc2c2 258.5px,#ffa1a1 329.5px)"></i>
<i style="top:96px;background:linear-gradient(90deg,#89fdff 0.5px,#fefcff 163.5px,#ffbec1 261.5px,#ffa0a2 329.5px)"></i>
<i style="top:99px;background:linear-gradient(90deg,#8afaff 0.5px,#fff7fc 168.5px,#ffbdc2 260.5px,#ff9ea2 329.5px)"></i>
<i style="top:102px;background:linear-gradient(90deg,#8af8ff 0.5px,#fff4fc 168.5px,#ffbbc1 261.5px,#ff9da2 329.5px)"></i>
<i style="top:105px;background:linear-gradient(90deg,#8af6ff 0.5px,#fff2fc 168.5px,#ffb9c2 261.5px,#ff9ba3 329.5px)"></i>
<i style="top:108px;background:linear-gradient(90deg,#8af3ff 0.5px,#fff0fd 168.5px,#ffb7c2 261.5px,#ff9aa3 329.5px)"></i>
<i style="top:111px;background:linear-gradient(90deg,#8bf1ff 0.5px,#ffedfc 169.5px,#ffb5c1 263.5px,#ff98a3 329.5px)"></i>
<i style="top:114px;background:linear-gradient(90deg,#8befff 0.5px,#ffeafc 169.5px,#ffb3c2 263.5px,#ff97a4 329.5px)"></i>
<i style="top:117px;background:linear-gradient(90deg,#8bedff 0.5px,#ffe8fd 169.5px,#ffb1c1 264.5px,#ff95a4 329.5px)"></i>
<i style="top:120px;background:linear-gradient(90deg,#8beaff 0.5px,#ffe5fc 170.5px,#ffaec1 265.5px,#ff94a5 329.5px)"></i>
<i style="top:123px;background:linear-gradient(90deg,#8ce8ff 0.5px,#ffe3fc 170.5px,#ffadc2 265.5px,#ff92a5 329.5px)"></i>
<i style="top:126px;background:linear-gradient(90deg,#8ce6ff 0.5px,#ffe0fc 170.5px,#ffabc1 266.5px,#ff91a5 329.5px)"></i>
<i style="top:129px;background:linear-gradient(90deg,#8ce4ff 0.5px,#ffdefd 170.5px,#ffa9c2 266.5px,#ff8fa6 329.5px)"></i>
<i style="top:132px;background:linear-gradient(90deg,#8ce1ff 0.5px,#ffdbfc 171.5px,#ffa6c1 268.5px,#ff8ea6 329.5px)"></i>
<i style="top:135px;background:linear-gradient(90deg,#8ddfff 0.5px,#ffd9fc 171.5px,#ffa5c1 268.5px,#ff8ca6 329.5px)"></i>
<i style="top:138px;background:linear-gradient(90deg,#8dddff 0.5px,#ffd7fc 171.5px,#ffa3c2 268.5px,#ff8ba7 329.5px)"></i>
<i style="top:141px;background:linear-gradient(90deg,#8ddbff 0.5px,#ffd5fd 171.5px,#ffa1c2 269.5px,#ff8aa7 329.5px)"></i>
<i style="top:144px;background:linear-gradient(90deg,#8dd9ff 0.5px,#ffd2fc 172.5px,#ff9fc1 270.5px,#ff88a7 329.5px)"></i>
<i style="top:147px;background:linear-gradient(90deg,#8ed7ff 0.5px,#ffd0fc 172.5px,#ff9dc2 270.5px,#ff87a8 329.5px)"></i>
<i style="top:150px;background:linear-gradient(90deg,#8ed5ff 0.5px,#ffcefc 172.5px,#ff9bc1 271.5px,#ff85a8 329.5px)"></i>
<i style="top:153px;background:linear-gradient(90deg,#8ed3ff 0.5px,#ffccfd 172.5px,#ff9ac2 271.5px,#ff84a8 329.5px)"></i>
<i style="top:156px;background:linear-gradient(90deg,#8ed0ff 0.5px,#ffc9fc 173.5px,#ff97c1 273.5px,#ff83a9 329.5px)"></i>
<i style="top:159px;background:linear-gradient(90deg,#8fceff 0.5px,#ffc7fc 173.5px,#ff96c1 273.5px,#ff81a9 329.5px)"></i>
<i style="top:162px;background:linear-gradient(90deg,#8fccff 0.5px,#ffc5fc 173.5px,#ff94c2 273.5px,#ff80a9 329.5px)"></i>
<i style="top:165px;background:linear-gradient(90deg,#8fcaff 0.5px,#ffc3fd 173.5px,#ff92c2 274.5px,#ff7faa 329.5px)"></i>
<i style="top:168px;background:linear-gradient(90deg,#8fc8ff 0.5px,#ffc0fc 174.5px,#ff90c1 275.5px,#ff7daa 329.5px)"></i>
<i style="top:171px;background:linear-gradient(90deg,#90c6ff 0.5px,#ffbefc 174.5px,#ff8fc2 275.5px,#ff7caa 329.5px)"></i>
<i style="top:174px;background:linear-gradient(90deg,#90c4ff 0.5px,#ffbcfc 174.5px,#ff8dc1 276.5px,#ff7bab 329.5px)"></i>
<i style="top:177px;background:linear-gradient(90deg,#90c2ff 0.5px,#ffbafd 174.5px,#ff8bc2 276.5px,#ff79ab 329.5px)"></i>
<i style="top:180px;background:linear-gradient(90deg,#90c0ff 0.5px,#ffb8fc 175.5px,#ff89c1 278.5px,#ff78ab 329.5px)"></i>
<i style="top:183px;background:linear-gradient(90deg,#91beff 0.5px,#ffb6fc 175.5px,#ff88c1 278.5px,#ff77ac 329.5px)"></i>
<i style="top:186px;background:linear-gradient(90deg,#91bdff 0.5px,#ffb4fc 175.5px,#ff86c2 278.5px,#ff75ac 329.5px)"></i>
<i style="top:189px;background:linear-gradient(90deg,#91bbff 0.5px,#ffb2fd 175.5px,#ff84c2 279.5px,#ff74ac 329.5px)"></i>
</div>
<svg width="1659" height="897" viewBox="0 0 1659 897">
<defs>
<linearGradient id="tab" x1="0" y1="0" x2="0" y2="1"><stop offset="0" stop-color="#4c4c4c"/><stop offset="1" stop-color="#353535"/></linearGradient>
<radialGradient id="pc" cx="0.5" cy="0.8" r="0.8"><stop offset="0" stop-color="#474747"/><stop offset="1" stop-color="#3c3c3c"/></radialGradient>
<linearGradient id="pan" x1="0" y1="0" x2="0" y2="1"><stop offset="0" stop-color="#6e6e6e"/><stop offset="1" stop-color="#595959"/></linearGradient>
<radialGradient id="dd" cx="0.5" cy="0.3" r="0.7"><stop offset="0" stop-color="#505050"/><stop offset="1" stop-color="#5e5e5e"/></radialGradient>
<linearGradient id="ddl" x1="0" y1="0" x2="0" y2="1"><stop offset="0" stop-color="#4a4a4a"/><stop offset="1" stop-color="#686868"/></linearGradient>
<linearGradient id="gb" x1="0" y1="0" x2="0" y2="1"><stop offset="0" stop-color="#9a9a9a"/><stop offset="1" stop-color="#666"/></linearGradient>
<linearGradient id="gc" x1="0" y1="0" x2="0" y2="1"><stop offset="0" stop-color="#6c6c6c"/><stop offset="1" stop-color="#a0a0a0"/></linearGradient>
<linearGradient id="dew" x1="0" y1="0" x2="1" y2="0"><stop offset="0" stop-color="#fff"/><stop offset="0.1" stop-color="#fff"/><stop offset="0.42" stop-color="#fff"/><stop offset="1" stop-color="#6e6e6e"/></linearGradient>
<linearGradient id="dey" x1="0" y1="0" x2="1" y2="0"><stop offset="0" stop-color="#e0e050"/><stop offset="0.25" stop-color="#c8c800"/><stop offset="0.55" stop-color="#b8b800"/><stop offset="1" stop-color="#5c5c00"/></linearGradient>
<linearGradient id="dem" x1="0" y1="0" x2="1" y2="0"><stop offset="0" stop-color="#e060e0"/><stop offset="0.25" stop-color="#c400c4"/><stop offset="0.55" stop-color="#b000b0"/><stop offset="1" stop-color="#580058"/></linearGradient>
<linearGradient id="dec" x1="0" y1="0" x2="1" y2="0"><stop offset="0" stop-color="#50dcdc"/><stop offset="0.25" stop-color="#00c4c4"/><stop offset="0.6" stop-color="#00b4b4"/><stop offset="1" stop-color="#004e4e"/></linearGradient>
<linearGradient id="deb" x1="0" y1="0" x2="1" y2="0"><stop offset="0" stop-color="#5050dc"/><stop offset="0.25" stop-color="#0000c8"/><stop offset="0.55" stop-color="#0808b0"/><stop offset="1" stop-color="#000058"/></linearGradient>
<linearGradient id="deg" x1="0" y1="0" x2="1" y2="0"><stop offset="0" stop-color="#40dc40"/><stop offset="0.25" stop-color="#00c400"/><stop offset="0.55" stop-color="#00b000"/><stop offset="1" stop-color="#005c00"/></linearGradient>
<linearGradient id="der" x1="0" y1="0" x2="1" y2="0"><stop offset="0" stop-color="#e05050"/><stop offset="0.25" stop-color="#c80000"/><stop offset="0.55" stop-color="#b40404"/><stop offset="1" stop-color="#5a0000"/></linearGradient>
<linearGradient id="dek" x1="0" y1="0" x2="1" y2="0"><stop offset="0" stop-color="#e4e4e4"/><stop offset="0.12" stop-color="#c6c6c6"/><stop offset="0.5" stop-color="#b8b8b8"/><stop offset="1" stop-color="#585858"/></linearGradient>
<linearGradient id="wbar" x1="0" y1="0" x2="0" y2="1"><stop offset="0" stop-color="#fff"/><stop offset="0.42" stop-color="#fff"/><stop offset="1" stop-color="#767676"/></linearGradient>
<linearGradient id="rb" x1="0" y1="0" x2="0" y2="1"><stop offset="0" stop-color="#ff1a1a"/><stop offset="0.5" stop-color="#ff0000"/><stop offset="1" stop-color="#c00000"/></linearGradient>
<linearGradient id="bb" x1="0" y1="0" x2="0" y2="1"><stop offset="0" stop-color="#4a4aff"/><stop offset="0.25" stop-color="#0000ff"/><stop offset="0.6" stop-color="#0000f0"/><stop offset="1" stop-color="#000070"/></linearGradient>
<linearGradient id="th" x1="0" y1="0" x2="0" y2="1"><stop offset="0" stop-color="#222"/><stop offset="0.35" stop-color="#1e1e1e"/><stop offset="0.36" stop-color="#141414"/><stop offset="1" stop-color="#181818"/></linearGradient>
<linearGradient id="rh" x1="0" y1="0" x2="0" y2="1"><stop offset="0" stop-color="#2e2e2e"/><stop offset="1" stop-color="#222"/></linearGradient>
<linearGradient id="sbv" x1="0" y1="0" x2="1" y2="0"><stop offset="0" stop-color="#404040"/><stop offset="1" stop-color="#585858"/></linearGradient>
<linearGradient id="sbh" x1="0" y1="0" x2="0" y2="1"><stop offset="0" stop-color="#404040"/><stop offset="1" stop-color="#585858"/></linearGradient>
<linearGradient id="btn" x1="0" y1="0" x2="0" y2="1"><stop offset="0" stop-color="#a6a6a6"/><stop offset="0.6" stop-color="#7c7c7c"/><stop offset="1" stop-color="#646464"/></linearGradient>
<linearGradient id="btn2" x1="0" y1="0" x2="0" y2="1"><stop offset="0" stop-color="#a8a8a8"/><stop offset="1" stop-color="#707070"/></linearGradient>
<linearGradient id="btn3" x1="0" y1="0" x2="0" y2="1"><stop offset="0" stop-color="#a4a4a4"/><stop offset="1" stop-color="#8a8a8a"/></linearGradient>
<linearGradient id="cir" x1="0" y1="0" x2="0" y2="1"><stop offset="0" stop-color="#747474"/><stop offset="1" stop-color="#a0a0a0"/></linearGradient>
<linearGradient id="stp" x1="0" y1="0" x2="0" y2="1"><stop offset="0" stop-color="#b4b4b4"/><stop offset="0.45" stop-color="#a0a0a0"/><stop offset="0.46" stop-color="#808080"/><stop offset="1" stop-color="#8c8c8c"/></linearGradient>
</defs>
<rect x="0" y="0" width="1659" height="36" fill="#262626"/>
<rect x="0" y="35" width="1659" height="2" fill="#2b2b2b"/>
<rect x="0" y="0" width="72" height="35" fill="url(#tab)"/>
<rect x="74" y="0" width="39" height="35" fill="url(#tab)"/>
<rect x="72" y="0" width="1.5" height="35" fill="#8c8c8c"/>
<rect x="113" y="0" width="1.5" height="35" fill="#8c8c8c"/>
<circle cx="91.5" cy="19" r="12.5" fill="url(#pc)"/>
<line x1="87.5" y1="20.5" x2="95.5" y2="20.5" stroke="#9a9a9a" stroke-width="1.4"/>
<line x1="91.5" y1="16.5" x2="91.5" y2="24.5" stroke="#9a9a9a" stroke-width="1.4"/>
<text x="6.5" y="23.2" font-size="14.6" fill="#f0f0f0" stroke="#f0f0f0" stroke-width="0.25" textLength="58.5" lengthAdjust="spacingAndGlyphs">History 1</text>
<path d="M1054 35V3q0-3 3-3H1184q3 0 3 3V35z" fill="url(#pan)"/>
<path d="M1054 35V3q0-3 3-3h3.5V35z" fill="#12d012"/>
<rect x="1187" y="0" width="1" height="35" fill="#3a3a3a"/>
<path d="M1188 35V0H1229q3 0 3 3V35z" fill="url(#pan)"/>
<path d="M1240 35V3q0-3 3-3H1398.5q3 0 3 3V35z" fill="url(#pan)"/>
<path d="M1240 35V3q0-3 3-3h3.5V35z" fill="#12d012"/>
<path d="M1410 35V3q0-3 3-3H1585.5q3 0 3 3V35z" fill="url(#pan)"/>
<path d="M1410 35V3q0-3 3-3h3.5V35z" fill="#e6e600"/>
<circle cx="1163.5" cy="17" r="12" fill="url(#ddl)"/>
<path d="M1157.5 14.5h12l-6 6z" fill="#f4f4f4"/>
<circle cx="1381.5" cy="17" r="12" fill="url(#ddl)"/>
<path d="M1375.5 14.5h12l-6 6z" fill="#f4f4f4"/>
<circle cx="1569.5" cy="17" r="12" fill="url(#ddl)"/>
<path d="M1563.5 14.5h12l-6 6z" fill="#f4f4f4"/>
<circle cx="1213.3" cy="16.6" r="15.6" fill="#0000f2" stroke="#e8e8ff" stroke-width="1.2"/>
<text x="1213.5" y="21" font-size="11.8" fill="#fff" text-anchor="middle" font-weight="bold" textLength="18.8" lengthAdjust="spacingAndGlyphs">641</text>
<text x="1064.5" y="11.5" font-size="13.6" fill="#f4f4f4" stroke="#f4f4f4" stroke-width="0.55" textLength="82" lengthAdjust="spacingAndGlyphs">X-Rite i1Pro 3</text>
<text x="1064.5" y="30.8" font-size="13.6" fill="#f4f4f4" stroke="#f4f4f4" stroke-width="0.55" textLength="70" lengthAdjust="spacingAndGlyphs">Direct View</text>
<text x="1251" y="11.5" font-size="13.6" fill="#f4f4f4" stroke="#f4f4f4" stroke-width="0.55" textLength="80" lengthAdjust="spacingAndGlyphs">Mobile Forge</text>
<text x="1421" y="11.5" font-size="13.6" fill="#f4f4f4" stroke="#f4f4f4" stroke-width="0.55" textLength="132" lengthAdjust="spacingAndGlyphs">Direct Display Control</text>
<rect x="1593.6" y="-8" width="41" height="40.3" rx="5.5" fill="url(#gb)" stroke="#d8d8d8" stroke-width="1.3"/>
<rect x="1636.4" y="-8" width="41" height="40.3" rx="5.5" fill="url(#gb)" stroke="#d8d8d8" stroke-width="1.3"/>
<circle cx="1614" cy="15.6" r="11.9" fill="url(#gc)"/>
<circle cx="1652.8" cy="15.6" r="11.9" fill="url(#gc)"/>
<g transform="translate(1614 15.6)" fill="none" stroke="#dedede"><circle r="5.1" stroke-width="2.3"/><line x1="0" y1="-5.8" x2="0" y2="-8" stroke-width="2.4" transform="rotate(0)"/><line x1="0" y1="-5.8" x2="0" y2="-8" stroke-width="2.4" transform="rotate(45)"/><line x1="0" y1="-5.8" x2="0" y2="-8" stroke-width="2.4" transform="rotate(90)"/><line x1="0" y1="-5.8" x2="0" y2="-8" stroke-width="2.4" transform="rotate(135)"/><line x1="0" y1="-5.8" x2="0" y2="-8" stroke-width="2.4" transform="rotate(180)"/><line x1="0" y1="-5.8" x2="0" y2="-8" stroke-width="2.4" transform="rotate(225)"/><line x1="0" y1="-5.8" x2="0" y2="-8" stroke-width="2.4" transform="rotate(270)"/><line x1="0" y1="-5.8" x2="0" y2="-8" stroke-width="2.4" transform="rotate(315)"/></g>
<path d="M1656 8v13.2l-7.2-6.6z" fill="#fafafa"/>
<text x="50.5" y="91.5" font-size="36.5" fill="#f2f2f2" stroke="#f2f2f2" stroke-width="0.62" textLength="216" lengthAdjust="spacingAndGlyphs">Color Gamut</text>
<text x="41" y="652.5" font-size="28" fill="#f2f2f2" stroke="#f2f2f2" stroke-width="0.48" textLength="212" lengthAdjust="spacingAndGlyphs">Current Reading</text>
<text x="41" y="720.5" font-size="23.5" fill="#f2f2f2" stroke="#f2f2f2" stroke-width="0.4" textLength="99" lengthAdjust="spacingAndGlyphs">x: 0,2915</text>
<text x="192.5" y="720.5" font-size="23.5" fill="#f2f2f2" stroke="#f2f2f2" stroke-width="0.4" textLength="99.5" lengthAdjust="spacingAndGlyphs">y: 0,2987</text>
<text x="41" y="759.8" font-size="23.5" fill="#f2f2f2" stroke="#f2f2f2" stroke-width="0.4" textLength="93.5" lengthAdjust="spacingAndGlyphs">fL: 99,64</text>
<text x="41" y="799.5" font-size="23.5" fill="#f2f2f2" stroke="#f2f2f2" stroke-width="0.4" textLength="154" lengthAdjust="spacingAndGlyphs">cd/m²: 341,39</text>
<rect x="46.5" y="146" width="324" height="400" fill="#262626"/>
<line x1="46.5" y1="146" x2="46.5" y2="552" stroke="#a8a8a8" stroke-width="1.2"/>
<text x="46.5" y="567" font-size="13.5" fill="#d6d6d6" stroke="#d6d6d6" stroke-width="0.23" text-anchor="middle">0</text>
<line x1="89.6" y1="146" x2="89.6" y2="552" stroke="#7e7e7e" stroke-width="1.2"/>
<text x="89.6" y="567" font-size="13.5" fill="#d6d6d6" stroke="#d6d6d6" stroke-width="0.23" text-anchor="middle">2</text>
<line x1="132.7" y1="146" x2="132.7" y2="552" stroke="#7e7e7e" stroke-width="1.2"/>
<text x="132.7" y="567" font-size="13.5" fill="#d6d6d6" stroke="#d6d6d6" stroke-width="0.23" text-anchor="middle">4</text>
<line x1="175.8" y1="146" x2="175.8" y2="552" stroke="#7e7e7e" stroke-width="1.2"/>
<text x="175.8" y="567" font-size="13.5" fill="#d6d6d6" stroke="#d6d6d6" stroke-width="0.23" text-anchor="middle">6</text>
<line x1="218.9" y1="146" x2="218.9" y2="552" stroke="#7e7e7e" stroke-width="1.2"/>
<text x="218.9" y="567" font-size="13.5" fill="#d6d6d6" stroke="#d6d6d6" stroke-width="0.23" text-anchor="middle">8</text>
<line x1="262" y1="146" x2="262" y2="552" stroke="#7e7e7e" stroke-width="1.2"/>
<text x="262" y="567" font-size="13.5" fill="#d6d6d6" stroke="#d6d6d6" stroke-width="0.23" text-anchor="middle">10</text>
<line x1="305.1" y1="146" x2="305.1" y2="552" stroke="#7e7e7e" stroke-width="1.2"/>
<text x="305.1" y="567" font-size="13.5" fill="#d6d6d6" stroke="#d6d6d6" stroke-width="0.23" text-anchor="middle">12</text>
<line x1="348.2" y1="146" x2="348.2" y2="552" stroke="#7e7e7e" stroke-width="1.2"/>
<text x="348.2" y="567" font-size="13.5" fill="#d6d6d6" stroke="#d6d6d6" stroke-width="0.23" text-anchor="middle">14</text>
<line x1="370.5" y1="146" x2="370.5" y2="546" stroke="#a8a8a8" stroke-width="1.4"/>
<line x1="46.5" y1="145.5" x2="370.5" y2="145.5" stroke="#a8a8a8" stroke-width="1.4"/>
<line x1="46.5" y1="546" x2="370.5" y2="546" stroke="#a8a8a8" stroke-width="1.4"/>
<text x="208.8" y="141" font-size="13.5" fill="#d6d6d6" stroke="#d6d6d6" stroke-width="0.23" text-anchor="middle" textLength="76.5" lengthAdjust="spacingAndGlyphs">DeltaE 2000</text>
<rect x="46.8" y="151.6" width="268.8" height="38" fill="url(#dew)" stroke="#000" stroke-width="1.3"/>
<rect x="46.8" y="201.6" width="78.6" height="38" fill="url(#dey)" stroke="#000" stroke-width="1.3"/>
<rect x="46.8" y="251.6" width="118.8" height="38" fill="url(#dem)" stroke="#000" stroke-width="1.3"/>
<rect x="46.8" y="301.6" width="290.9" height="38" fill="url(#dec)" stroke="#000" stroke-width="1.3"/>
<rect x="46.8" y="351.6" width="84.7" height="38" fill="url(#deb)" stroke="#000" stroke-width="1.3"/>
<rect x="46.8" y="401.6" width="45.8" height="38" fill="url(#deg)" stroke="#000" stroke-width="1.3"/>
<rect x="46.8" y="451.6" width="61.8" height="38" fill="url(#der)" stroke="#000" stroke-width="1.3"/>
<rect x="46.8" y="501.6" width="256.8" height="38" fill="url(#dek)" stroke="#000" stroke-width="1.3"/>
<rect x="422" y="80.5" width="139.5" height="306.7" fill="#262626"/>
<line x1="417" y1="80.5" x2="561.5" y2="80.5" stroke="#7e7e7e" stroke-width="1.1"/>
<text x="416.5" y="86.1" font-size="13.5" fill="#d6d6d6" stroke="#d6d6d6" stroke-width="0.23" text-anchor="end">15</text>
<line x1="417" y1="132" x2="561.5" y2="132" stroke="#7e7e7e" stroke-width="1.1"/>
<text x="416.5" y="136.8" font-size="13.5" fill="#d6d6d6" stroke="#d6d6d6" stroke-width="0.23" text-anchor="end">10</text>
<line x1="417" y1="183" x2="561.5" y2="183" stroke="#7e7e7e" stroke-width="1.1"/>
<text x="416.5" y="187.8" font-size="13.5" fill="#d6d6d6" stroke="#d6d6d6" stroke-width="0.23" text-anchor="end">5</text>
<line x1="417" y1="234" x2="561.5" y2="234" stroke="#7e7e7e" stroke-width="1.1"/>
<text x="416.5" y="238.8" font-size="13.5" fill="#d6d6d6" stroke="#d6d6d6" stroke-width="0.23" text-anchor="end">0</text>
<line x1="417" y1="285.2" x2="561.5" y2="285.2" stroke="#7e7e7e" stroke-width="1.1"/>
<text x="416.5" y="290" font-size="13.5" fill="#d6d6d6" stroke="#d6d6d6" stroke-width="0.23" text-anchor="end">-5</text>
<line x1="417" y1="336.5" x2="561.5" y2="336.5" stroke="#7e7e7e" stroke-width="1.1"/>
<text x="416.5" y="341.3" font-size="13.5" fill="#d6d6d6" stroke="#d6d6d6" stroke-width="0.23" text-anchor="end">-10</text>
<line x1="417" y1="387.2" x2="561.5" y2="387.2" stroke="#7e7e7e" stroke-width="1.1"/>
<text x="416.5" y="392" font-size="13.5" fill="#d6d6d6" stroke="#d6d6d6" stroke-width="0.23" text-anchor="end">-15</text>
<line x1="422" y1="80" x2="422" y2="393.2" stroke="#a8a8a8" stroke-width="1.5"/>
<line x1="561.5" y1="80" x2="561.5" y2="393.2" stroke="#a8a8a8" stroke-width="1.5"/>
<line x1="422" y1="79.2" x2="561.5" y2="79.2" stroke="#777" stroke-width="1"/>
<line x1="422" y1="387.2" x2="561.5" y2="387.2" stroke="#a8a8a8" stroke-width="1.3"/>
<text x="478.5" y="75" font-size="13.5" fill="#d6d6d6" stroke="#d6d6d6" stroke-width="0.23" text-anchor="middle" textLength="41" lengthAdjust="spacingAndGlyphs">DeltaL</text>
<text x="491.75" y="401.7" font-size="13.5" fill="#d6d6d6" stroke="#d6d6d6" stroke-width="0.23" text-anchor="middle" textLength="37.5" lengthAdjust="spacingAndGlyphs">100W</text>
<line x1="436" y1="234" x2="546" y2="234" stroke="#1a1a1a" stroke-width="1.5"/>
<rect x="613" y="80.5" width="139" height="306.7" fill="#262626"/>
<line x1="608" y1="80.5" x2="752" y2="80.5" stroke="#7e7e7e" stroke-width="1.1"/>
<text x="607.5" y="86.1" font-size="13.5" fill="#d6d6d6" stroke="#d6d6d6" stroke-width="0.23" text-anchor="end">15</text>
<line x1="608" y1="132" x2="752" y2="132" stroke="#7e7e7e" stroke-width="1.1"/>
<text x="607.5" y="136.8" font-size="13.5" fill="#d6d6d6" stroke="#d6d6d6" stroke-width="0.23" text-anchor="end">10</text>
<line x1="608" y1="183" x2="752" y2="183" stroke="#7e7e7e" stroke-width="1.1"/>
<text x="607.5" y="187.8" font-size="13.5" fill="#d6d6d6" stroke="#d6d6d6" stroke-width="0.23" text-anchor="end">5</text>
<line x1="608" y1="234" x2="752" y2="234" stroke="#7e7e7e" stroke-width="1.1"/>
<text x="607.5" y="238.8" font-size="13.5" fill="#d6d6d6" stroke="#d6d6d6" stroke-width="0.23" text-anchor="end">0</text>
<line x1="608" y1="285.2" x2="752" y2="285.2" stroke="#7e7e7e" stroke-width="1.1"/>
<text x="607.5" y="290" font-size="13.5" fill="#d6d6d6" stroke="#d6d6d6" stroke-width="0.23" text-anchor="end">-5</text>
<line x1="608" y1="336.5" x2="752" y2="336.5" stroke="#7e7e7e" stroke-width="1.1"/>
<text x="607.5" y="341.3" font-size="13.5" fill="#d6d6d6" stroke="#d6d6d6" stroke-width="0.23" text-anchor="end">-10</text>
<line x1="608" y1="387.2" x2="752" y2="387.2" stroke="#7e7e7e" stroke-width="1.1"/>
<text x="607.5" y="392" font-size="13.5" fill="#d6d6d6" stroke="#d6d6d6" stroke-width="0.23" text-anchor="end">-15</text>
<line x1="613" y1="80" x2="613" y2="393.2" stroke="#a8a8a8" stroke-width="1.5"/>
<line x1="752" y1="80" x2="752" y2="393.2" stroke="#a8a8a8" stroke-width="1.5"/>
<line x1="613" y1="79.2" x2="752" y2="79.2" stroke="#777" stroke-width="1"/>
<line x1="613" y1="387.2" x2="752" y2="387.2" stroke="#a8a8a8" stroke-width="1.3"/>
<text x="670" y="75" font-size="13.5" fill="#d6d6d6" stroke="#d6d6d6" stroke-width="0.23" text-anchor="middle" textLength="42" lengthAdjust="spacingAndGlyphs">DeltaC</text>
<text x="682.5" y="401.7" font-size="13.5" fill="#d6d6d6" stroke="#d6d6d6" stroke-width="0.23" text-anchor="middle" textLength="37.5" lengthAdjust="spacingAndGlyphs">100W</text>
<rect x="627.2" y="80" width="110.3" height="154.3" fill="url(#wbar)" stroke="#000" stroke-width="1.4"/>
<rect x="803.5" y="80.5" width="139.5" height="306.7" fill="#262626"/>
<line x1="798.5" y1="80.5" x2="943" y2="80.5" stroke="#7e7e7e" stroke-width="1.1"/>
<text x="798" y="86.1" font-size="13.5" fill="#d6d6d6" stroke="#d6d6d6" stroke-width="0.23" text-anchor="end">15</text>
<line x1="798.5" y1="132" x2="943" y2="132" stroke="#7e7e7e" stroke-width="1.1"/>
<text x="798" y="136.8" font-size="13.5" fill="#d6d6d6" stroke="#d6d6d6" stroke-width="0.23" text-anchor="end">10</text>
<line x1="798.5" y1="183" x2="943" y2="183" stroke="#7e7e7e" stroke-width="1.1"/>
<text x="798" y="187.8" font-size="13.5" fill="#d6d6d6" stroke="#d6d6d6" stroke-width="0.23" text-anchor="end">5</text>
<line x1="798.5" y1="234" x2="943" y2="234" stroke="#7e7e7e" stroke-width="1.1"/>
<text x="798" y="238.8" font-size="13.5" fill="#d6d6d6" stroke="#d6d6d6" stroke-width="0.23" text-anchor="end">0</text>
<line x1="798.5" y1="285.2" x2="943" y2="285.2" stroke="#7e7e7e" stroke-width="1.1"/>
<text x="798" y="290" font-size="13.5" fill="#d6d6d6" stroke="#d6d6d6" stroke-width="0.23" text-anchor="end">-5</text>
<line x1="798.5" y1="336.5" x2="943" y2="336.5" stroke="#7e7e7e" stroke-width="1.1"/>
<text x="798" y="341.3" font-size="13.5" fill="#d6d6d6" stroke="#d6d6d6" stroke-width="0.23" text-anchor="end">-10</text>
<line x1="798.5" y1="387.2" x2="943" y2="387.2" stroke="#7e7e7e" stroke-width="1.1"/>
<text x="798" y="392" font-size="13.5" fill="#d6d6d6" stroke="#d6d6d6" stroke-width="0.23" text-anchor="end">-15</text>
<line x1="803.5" y1="80" x2="803.5" y2="393.2" stroke="#a8a8a8" stroke-width="1.5"/>
<line x1="943" y1="80" x2="943" y2="393.2" stroke="#a8a8a8" stroke-width="1.5"/>
<line x1="803.5" y1="79.2" x2="943" y2="79.2" stroke="#777" stroke-width="1"/>
<line x1="803.5" y1="387.2" x2="943" y2="387.2" stroke="#a8a8a8" stroke-width="1.3"/>
<text x="860.5" y="75" font-size="13.5" fill="#d6d6d6" stroke="#d6d6d6" stroke-width="0.23" text-anchor="middle" textLength="43.3" lengthAdjust="spacingAndGlyphs">DeltaH</text>
<text x="873.25" y="401.7" font-size="13.5" fill="#d6d6d6" stroke="#d6d6d6" stroke-width="0.23" text-anchor="middle" textLength="37.5" lengthAdjust="spacingAndGlyphs">100W</text>
<line x1="818" y1="234" x2="928" y2="234" stroke="#1a1a1a" stroke-width="1.5"/>
<rect x="390" y="418" width="572" height="157.5" fill="#000"/>
<rect x="407.5" y="425.5" width="59" height="64.5" fill="#c0c2e2"/>
<rect x="407.5" y="489.8" width="59" height="63.3" fill="#c6c6c6"/>
<rect x="407.6" y="425.5" width="58.8" height="127.6" fill="none" stroke="#ececec" stroke-width="1.2"/>
<text x="437" y="568" font-size="11.6" fill="#fff" text-anchor="middle" font-weight="bold">White</text>
<rect x="477.5" y="425.5" width="59" height="64.5" fill="#b81a00"/>
<rect x="477.5" y="489.8" width="59" height="63.3" fill="#c20a0a"/>
<rect x="477.6" y="425.5" width="58.8" height="127.6" fill="none" stroke="#ececec" stroke-width="1.2"/>
<text x="507" y="568" font-size="11.6" fill="#fff" text-anchor="middle" font-weight="bold">Red</text>
<rect x="547.5" y="425.5" width="59" height="64.5" fill="#40c812"/>
<rect x="547.5" y="489.8" width="59" height="63.3" fill="#00c400"/>
<rect x="547.6" y="425.5" width="58.8" height="127.6" fill="none" stroke="#ececec" stroke-width="1.2"/>
<text x="577" y="568" font-size="11.6" fill="#fff" text-anchor="middle" font-weight="bold">Green</text>
<rect x="617.5" y="425.5" width="59" height="64.5" fill="#2000e0"/>
<rect x="617.5" y="489.8" width="59" height="63.3" fill="#2424c4"/>
<rect x="617.6" y="425.5" width="58.8" height="127.6" fill="none" stroke="#ececec" stroke-width="1.2"/>
<text x="647" y="568" font-size="11.6" fill="#fff" text-anchor="middle" font-weight="bold">Blue</text>
<rect x="687.5" y="425.5" width="59" height="64.5" fill="#3cc0e4"/>
<rect x="687.5" y="489.8" width="59" height="63.3" fill="#00c4c4"/>
<rect x="687.6" y="425.5" width="58.8" height="127.6" fill="none" stroke="#ececec" stroke-width="1.2"/>
<text x="717" y="568" font-size="11.6" fill="#fff" text-anchor="middle" font-weight="bold">Cyan</text>
<rect x="757.5" y="425.5" width="59" height="64.5" fill="#b400e0"/>
<rect x="757.5" y="489.8" width="59" height="63.3" fill="#c41cc4"/>
<rect x="757.6" y="425.5" width="58.8" height="127.6" fill="none" stroke="#ececec" stroke-width="1.2"/>
<text x="787" y="568" font-size="11.6" fill="#fff" text-anchor="middle" font-weight="bold">Magenta</text>
<rect x="827.5" y="425.5" width="59" height="64.5" fill="#bcc800"/>
<rect x="827.5" y="489.8" width="59" height="63.3" fill="#c4c400"/>
<rect x="827.6" y="425.5" width="58.8" height="127.6" fill="none" stroke="#ececec" stroke-width="1.2"/>
<text x="857" y="568" font-size="11.6" fill="#fff" text-anchor="middle" font-weight="bold">Yellow</text>
<rect x="897.5" y="425.5" width="59" height="64.5" fill="#e0e4ff"/>
<rect x="897.5" y="489.8" width="59" height="63.3" fill="#e2e2e2"/>
<rect x="897.6" y="425.5" width="58.8" height="127.6" fill="none" stroke="#ececec" stroke-width="1.2"/>
<text x="927" y="568" font-size="11.6" fill="#fff" text-anchor="middle" font-weight="bold">100W</text>
<text x="0" y="0" font-size="11.6" fill="#fff" text-anchor="middle" font-weight="bold" transform="translate(403 454) rotate(-90)">Actual</text>
<text x="0" y="0" font-size="11.6" fill="#fff" text-anchor="middle" font-weight="bold" transform="translate(403 526) rotate(-90)">Target</text>
<rect x="369" y="627.5" width="245" height="173.3" fill="#262626"/>
<line x1="364" y1="627.5" x2="614" y2="627.5" stroke="#7e7e7e" stroke-width="1.1"/>
<text x="363.5" y="633.1" font-size="13.5" fill="#d6d6d6" stroke="#d6d6d6" stroke-width="0.23" text-anchor="end">40</text>
<line x1="364" y1="671.5" x2="614" y2="671.5" stroke="#7e7e7e" stroke-width="1.1"/>
<text x="363.5" y="676.3" font-size="13.5" fill="#d6d6d6" stroke="#d6d6d6" stroke-width="0.23" text-anchor="end">20</text>
<line x1="364" y1="714.5" x2="614" y2="714.5" stroke="#7e7e7e" stroke-width="1.1"/>
<text x="363.5" y="719.3" font-size="13.5" fill="#d6d6d6" stroke="#d6d6d6" stroke-width="0.23" text-anchor="end">0</text>
<line x1="364" y1="758" x2="614" y2="758" stroke="#7e7e7e" stroke-width="1.1"/>
<text x="363.5" y="762.8" font-size="13.5" fill="#d6d6d6" stroke="#d6d6d6" stroke-width="0.23" text-anchor="end">-20</text>
<line x1="364" y1="800.8" x2="614" y2="800.8" stroke="#7e7e7e" stroke-width="1.1"/>
<text x="363.5" y="805.6" font-size="13.5" fill="#d6d6d6" stroke="#d6d6d6" stroke-width="0.23" text-anchor="end">-40</text>
<line x1="369" y1="627" x2="369" y2="806.8" stroke="#a8a8a8" stroke-width="1.5"/>
<line x1="614" y1="627" x2="614" y2="806.8" stroke="#a8a8a8" stroke-width="1.5"/>
<line x1="369" y1="626.2" x2="614" y2="626.2" stroke="#777" stroke-width="1"/>
<line x1="369" y1="800.8" x2="614" y2="800.8" stroke="#a8a8a8" stroke-width="1.3"/>
<text x="478.5" y="621.5" font-size="13.5" fill="#d6d6d6" stroke="#d6d6d6" stroke-width="0.23" text-anchor="middle">RGB Balance</text>
<text x="491.5" y="817.2" font-size="13.5" fill="#d6d6d6" stroke="#d6d6d6" stroke-width="0.23" text-anchor="middle" textLength="37.5" lengthAdjust="spacingAndGlyphs">100W</text>
<rect x="394.5" y="714.5" width="64" height="15" fill="url(#rb)" stroke="#000" stroke-width="1.4"/>
<rect x="459" y="714.6" width="65.5" height="2.8" fill="#2c8e2c" stroke="#0a1e0a" stroke-width="1.1"/>
<rect x="525.5" y="644.8" width="65" height="69.6" fill="url(#bb)" stroke="#000" stroke-width="1.4"/>
<rect x="972.5" y="52" width="664" height="535" fill="none" stroke="#1c1c1c" stroke-width="7"/>
<text x="1304.5" y="73.5" font-size="13.5" fill="#d6d6d6" stroke="#d6d6d6" stroke-width="0.23" text-anchor="middle" textLength="81.5" lengthAdjust="spacingAndGlyphs">CIE 1976 u'v'</text>
<clipPath id="plc"><rect x="0" y="0" width="620" height="478"/></clipPath>
<g transform="translate(1011 78)"><path clip-path="url(#plc)" d="M-5 -5H900V483H-5z M273.4 459.2 L271.6 460.9 L269.8 462.2 L268.0 463.3 L266.2 464.0 L264.4 464.4 L262.6 464.5 L260.7 464.2 L258.9 463.6 L257.0 462.8 L255.1 461.5 L253.2 460.0 L209.7 421.6 L206.8 419.0 L203.6 416.3 L200.4 413.4 L197.1 410.3 L193.7 407.1 L190.1 403.7 L186.5 400.1 L182.7 396.3 L178.7 392.1 L174.4 387.5 L169.9 382.3 L165.0 376.6 L159.8 370.4 L154.4 363.6 L148.8 356.4 L143.0 348.9 L137.1 340.8 L131.0 332.4 L124.8 323.4 L118.5 314.1 L112.0 304.2 L105.5 294.0 L98.9 283.4 L92.3 272.5 L85.7 261.4 L79.1 250.2 L72.6 238.8 L66.2 227.4 L60.0 215.9 L54.1 204.4 L48.5 193.0 L43.2 181.8 L38.3 170.9 L33.7 160.1 L29.4 149.7 L25.4 139.6 L21.7 129.9 L18.3 120.7 L15.3 111.9 L12.6 103.6 L10.3 95.8 L8.3 88.5 L6.5 81.6 L5.1 75.3 L4.0 69.3 L3.1 63.7 L2.4 58.6 L2.0 53.9 L1.8 49.5 L1.9 45.4 L2.1 41.6 L2.6 38.1 L3.2 34.8 L4.1 31.8 L5.2 29.0 L6.4 26.5 L7.8 24.2 L9.4 22.1 L11.2 20.2 L13.0 18.6 L15.1 17.2 L17.2 16.0 L19.4 14.9 L21.8 14.0 L24.2 13.3 L26.7 12.7 L29.3 12.2 L32.0 11.9 L34.7 11.6 L37.5 11.3 L40.3 11.2 L43.2 11.0 L46.1 10.9 L49.0 10.9 L52.0 10.8 L54.9 10.8 L57.8 10.9 L60.7 10.9 L63.7 10.9 L66.6 11.0 L69.6 11.1 L72.7 11.3 L75.7 11.4 L78.8 11.6 L82.0 11.7 L85.2 11.9 L88.4 12.2 L91.7 12.4 L95.1 12.7 L98.5 12.9 L102.0 13.2 L105.5 13.5 L109.1 13.9 L112.7 14.2 L116.5 14.6 L120.3 14.9 L124.1 15.3 L128.1 15.7 L132.1 16.1 L136.2 16.6 L140.4 17.0 L144.7 17.5 L149.1 17.9 L153.5 18.4 L158.1 18.9 L162.7 19.4 L167.5 19.9 L172.3 20.5 L177.2 21.0 L182.3 21.6 L187.4 22.2 L192.6 22.8 L198.0 23.4 L203.4 24.0 L209.0 24.6 L214.7 25.3 L220.5 25.9 L226.3 26.6 L232.3 27.3 L238.4 28.0 L244.7 28.7 L251.0 29.5 L257.4 30.2 L263.9 31.0 L270.6 31.7 L277.3 32.5 L284.1 33.3 L291.0 34.1 L298.1 34.9 L305.2 35.7 L312.3 36.5 L319.6 37.4 L326.9 38.2 L334.3 39.0 L341.8 39.9 L349.3 40.8 L356.8 41.6 L364.4 42.5 L372.0 43.4 L379.5 44.3 L386.9 45.1 L394.2 46.0 L401.5 46.8 L408.7 47.6 L415.9 48.5 L423.2 49.3 L430.4 50.1 L437.5 50.9 L444.5 51.7 L451.4 52.5 L458.1 53.3 L464.7 54.1 L471.1 54.8 L477.4 55.5 L483.5 56.2 L489.5 56.9 L495.3 57.6 L501.0 58.2 L506.5 58.9 L511.9 59.5 L517.1 60.1 L522.1 60.7 L526.9 61.2 L531.6 61.7 L536.1 62.3 L540.5 62.8 L544.7 63.3 L548.7 63.7 L552.6 64.2 L556.4 64.6 L560.1 65.0 L563.6 65.4 L567.0 65.8 L570.3 66.2 L573.5 66.6 L576.6 66.9 L579.7 67.3 L582.6 67.6 L585.5 67.9 L588.3 68.3 L591.0 68.6 L593.6 68.9 L596.1 69.2 L598.5 69.4 L600.8 69.7 L603.0 70.0 L605.2 70.2 L607.2 70.5 L609.2 70.7 L611.0 70.9 L612.8 71.1 L614.4 71.3 L615.9 71.5 L617.4 71.6 L618.8 71.8 L620.1 71.9 L621.4 72.1 L622.6 72.2 L623.7 72.4 L624.8 72.5 L625.9 72.6 L626.8 72.7 L627.8 72.8 L628.6 72.9 L629.4 73.0 L630.1 73.1 L630.8 73.2 L631.4 73.2 L631.9 73.3 L632.4 73.4 L633.0 73.4 L633.5 73.5 L634.0 73.5 L634.4 73.6 L634.9 73.6 L635.3 73.7 L635.7 73.7 L636.1 73.8 L636.5 73.8 L636.9 73.9 L637.3 73.9 L637.7 74.0 L638.1 74.0 L638.4 74.0 L638.8 74.1 L639.2 74.1 L639.6 74.2 L639.9 74.2 L640.3 74.3 L640.6 74.3 L640.8 74.3 L641.0 74.3 L641.2 74.4 L641.4 74.4 L641.5 74.4 L641.6 74.4 L641.8 74.4 L641.9 74.4 L642.0 74.5 L642.1 74.5 L642.2 74.5 L642.2 74.5 L642.3 74.5 L642.3 74.5 L642.3 74.5z" fill="#262626" fill-rule="evenodd"/></g>
<line x1="1011.5" y1="555.2" x2="1011.5" y2="561" stroke="#a8a8a8" stroke-width="1.5"/>
<text x="1011.5" y="575.4" font-size="13.4" fill="#d6d6d6" stroke="#d6d6d6" stroke-width="0.23" text-anchor="middle">0</text>
<line x1="1005" y1="555.4" x2="1011" y2="555.4" stroke="#a8a8a8" stroke-width="1.6"/>
<text x="1004.5" y="561.8" font-size="13.4" fill="#d6d6d6" stroke="#d6d6d6" stroke-width="0.23" text-anchor="end">0</text>
<line x1="1063.05" y1="555.2" x2="1063.05" y2="561" stroke="#a8a8a8" stroke-width="1.5"/>
<text x="1063.05" y="575.4" font-size="13.4" fill="#d6d6d6" stroke="#d6d6d6" stroke-width="0.23" text-anchor="middle">0,05</text>
<line x1="1005" y1="515.65" x2="1011" y2="515.65" stroke="#a8a8a8" stroke-width="1.6"/>
<text x="1004.5" y="520.85" font-size="13.4" fill="#d6d6d6" stroke="#d6d6d6" stroke-width="0.23" text-anchor="end">0,05</text>
<line x1="1114.6" y1="555.2" x2="1114.6" y2="561" stroke="#a8a8a8" stroke-width="1.5"/>
<text x="1114.6" y="575.4" font-size="13.4" fill="#d6d6d6" stroke="#d6d6d6" stroke-width="0.23" text-anchor="middle">0,1</text>
<line x1="1005" y1="475.9" x2="1011" y2="475.9" stroke="#a8a8a8" stroke-width="1.6"/>
<text x="1004.5" y="481.1" font-size="13.4" fill="#d6d6d6" stroke="#d6d6d6" stroke-width="0.23" text-anchor="end">0,1</text>
<line x1="1166.15" y1="555.2" x2="1166.15" y2="561" stroke="#a8a8a8" stroke-width="1.5"/>
<text x="1166.15" y="575.4" font-size="13.4" fill="#d6d6d6" stroke="#d6d6d6" stroke-width="0.23" text-anchor="middle">0,15</text>
<line x1="1005" y1="436.15" x2="1011" y2="436.15" stroke="#a8a8a8" stroke-width="1.6"/>
<text x="1004.5" y="441.35" font-size="13.4" fill="#d6d6d6" stroke="#d6d6d6" stroke-width="0.23" text-anchor="end">0,15</text>
<line x1="1217.7" y1="555.2" x2="1217.7" y2="561" stroke="#a8a8a8" stroke-width="1.5"/>
<text x="1217.7" y="575.4" font-size="13.4" fill="#d6d6d6" stroke="#d6d6d6" stroke-width="0.23" text-anchor="middle">0,2</text>
<line x1="1005" y1="396.4" x2="1011" y2="396.4" stroke="#a8a8a8" stroke-width="1.6"/>
<text x="1004.5" y="401.6" font-size="13.4" fill="#d6d6d6" stroke="#d6d6d6" stroke-width="0.23" text-anchor="end">0,2</text>
<line x1="1269.25" y1="555.2" x2="1269.25" y2="561" stroke="#a8a8a8" stroke-width="1.5"/>
<text x="1269.25" y="575.4" font-size="13.4" fill="#d6d6d6" stroke="#d6d6d6" stroke-width="0.23" text-anchor="middle">0,25</text>
<line x1="1005" y1="356.65" x2="1011" y2="356.65" stroke="#a8a8a8" stroke-width="1.6"/>
<text x="1004.5" y="361.85" font-size="13.4" fill="#d6d6d6" stroke="#d6d6d6" stroke-width="0.23" text-anchor="end">0,25</text>
<line x1="1320.8" y1="555.2" x2="1320.8" y2="561" stroke="#a8a8a8" stroke-width="1.5"/>
<text x="1320.8" y="575.4" font-size="13.4" fill="#d6d6d6" stroke="#d6d6d6" stroke-width="0.23" text-anchor="middle">0,3</text>
<line x1="1005" y1="316.9" x2="1011" y2="316.9" stroke="#a8a8a8" stroke-width="1.6"/>
<text x="1004.5" y="322.1" font-size="13.4" fill="#d6d6d6" stroke="#d6d6d6" stroke-width="0.23" text-anchor="end">0,3</text>
<line x1="1372.35" y1="555.2" x2="1372.35" y2="561" stroke="#a8a8a8" stroke-width="1.5"/>
<text x="1372.35" y="575.4" font-size="13.4" fill="#d6d6d6" stroke="#d6d6d6" stroke-width="0.23" text-anchor="middle">0,35</text>
<line x1="1005" y1="277.15" x2="1011" y2="277.15" stroke="#a8a8a8" stroke-width="1.6"/>
<text x="1004.5" y="282.35" font-size="13.4" fill="#d6d6d6" stroke="#d6d6d6" stroke-width="0.23" text-anchor="end">0,35</text>
<line x1="1423.9" y1="555.2" x2="1423.9" y2="561" stroke="#a8a8a8" stroke-width="1.5"/>
<text x="1423.9" y="575.4" font-size="13.4" fill="#d6d6d6" stroke="#d6d6d6" stroke-width="0.23" text-anchor="middle">0,4</text>
<line x1="1005" y1="237.4" x2="1011" y2="237.4" stroke="#a8a8a8" stroke-width="1.6"/>
<text x="1004.5" y="242.6" font-size="13.4" fill="#d6d6d6" stroke="#d6d6d6" stroke-width="0.23" text-anchor="end">0,4</text>
<line x1="1475.45" y1="555.2" x2="1475.45" y2="561" stroke="#a8a8a8" stroke-width="1.5"/>
<text x="1475.45" y="575.4" font-size="13.4" fill="#d6d6d6" stroke="#d6d6d6" stroke-width="0.23" text-anchor="middle">0,45</text>
<line x1="1005" y1="197.65" x2="1011" y2="197.65" stroke="#a8a8a8" stroke-width="1.6"/>
<text x="1004.5" y="202.85" font-size="13.4" fill="#d6d6d6" stroke="#d6d6d6" stroke-width="0.23" text-anchor="end">0,45</text>
<line x1="1527" y1="555.2" x2="1527" y2="561" stroke="#a8a8a8" stroke-width="1.5"/>
<text x="1527" y="575.4" font-size="13.4" fill="#d6d6d6" stroke="#d6d6d6" stroke-width="0.23" text-anchor="middle">0,5</text>
<line x1="1005" y1="157.9" x2="1011" y2="157.9" stroke="#a8a8a8" stroke-width="1.6"/>
<text x="1004.5" y="163.1" font-size="13.4" fill="#d6d6d6" stroke="#d6d6d6" stroke-width="0.23" text-anchor="end">0,5</text>
<line x1="1578.55" y1="555.2" x2="1578.55" y2="561" stroke="#a8a8a8" stroke-width="1.5"/>
<text x="1578.55" y="575.4" font-size="13.4" fill="#d6d6d6" stroke="#d6d6d6" stroke-width="0.23" text-anchor="middle">0,55</text>
<line x1="1005" y1="118.15" x2="1011" y2="118.15" stroke="#a8a8a8" stroke-width="1.6"/>
<text x="1004.5" y="123.35" font-size="13.4" fill="#d6d6d6" stroke="#d6d6d6" stroke-width="0.23" text-anchor="end">0,55</text>
<rect x="1011.3" y="78.3" width="619.6" height="476.9" fill="none" stroke="#8e8e8e" stroke-width="1.3"/>
<line x1="1010.6" y1="78.3" x2="1631" y2="78.3" stroke="#b4b4b4" stroke-width="1.4"/>
<line x1="1011.3" y1="78" x2="1011.3" y2="555.8" stroke="#b4b4b4" stroke-width="1.4"/>
<rect x="1384" y="523.5" width="244" height="26.5" fill="#333"/>
<text x="1384" y="544" font-size="19" fill="#f4f4f4" stroke="#f4f4f4" stroke-width="0.32" textLength="215" lengthAdjust="spacingAndGlyphs" xml:space="preserve">Gamut Coverage:  94,3%</text>
<rect x="1469.1" y="133.1" width="12.8" height="12.8" fill="none" stroke="#f4f4f4" stroke-width="1.5"/>
<rect x="1133.7" y="101.7" width="12.8" height="12.8" fill="none" stroke="#f4f4f4" stroke-width="1.5"/>
<rect x="1185.6" y="422.6" width="12.8" height="12.8" fill="none" stroke="#f4f4f4" stroke-width="1.5"/>
<rect x="1147.9" y="186.5" width="12.8" height="12.8" fill="none" stroke="#f4f4f4" stroke-width="1.5"/>
<rect x="1318.9" y="285.3" width="12.8" height="12.8" fill="none" stroke="#f4f4f4" stroke-width="1.5"/>
<rect x="1214.6" y="108.0" width="12.8" height="12.8" fill="none" stroke="#f4f4f4" stroke-width="1.5"/>
<rect x="1209.2" y="177.2" width="11.6" height="11.6" fill="#fff" fill-opacity=".35" stroke="#000" stroke-width="2.2"/>
<circle cx="1148.9" cy="109.4" r="4.2" fill="#18b418" stroke="#111" stroke-width="1.1"/>
<circle cx="1209.5" cy="114.4" r="4.2" fill="#c4c418" stroke="#111" stroke-width="1.1"/>
<circle cx="1466.4" cy="136.3" r="4.2" fill="#d00000" stroke="#111" stroke-width="1.1"/>
<circle cx="1163.4" cy="218.5" r="4.2" fill="#28bcb4" stroke="#111" stroke-width="1.1"/>
<circle cx="1297.5" cy="331.6" r="4.2" fill="#c818b4" stroke="#111" stroke-width="1.1"/>
<circle cx="1194.8" cy="450.6" r="4.2" fill="#0808c0" stroke="#111" stroke-width="1.1"/>
<circle cx="1209.9" cy="201.8" r="4.2" fill="#d0d0d0" stroke="#111" stroke-width="1.1"/>
<circle cx="1212.7" cy="198.1" r="4.2" fill="#fff" stroke="#111" stroke-width="1.1"/>
<text x="807.5" y="613.5" font-size="13.2" fill="#d6d6d6" stroke="#d6d6d6" stroke-width="0.22" text-anchor="middle">CIE 1931 xy</text>
<rect x="642.5" y="618.5" width="330.5" height="192" fill="none" stroke="#8a8a8a" stroke-width="1.3"/>
<clipPath id="xyc"><rect x="643" y="619" width="329.5" height="191"/></clipPath>
<g clip-path="url(#xyc)"><circle cx="694.5" cy="808" r="4.2" fill="#c8c8c8" stroke="#111" stroke-width="1.1"/></g>
<circle cx="707.5" cy="796.5" r="4.2" fill="#fff" stroke="#111" stroke-width="1.1"/>
<rect x="800.5" y="707" width="13.5" height="13" fill="#ffffff" fill-opacity="0.15" stroke="#000" stroke-width="2"/>
<clipPath id="tbc"><rect x="990" y="605" width="613" height="191.5"/></clipPath>
<g clip-path="url(#tbc)">
<rect x="1004" y="605" width="599" height="38" fill="url(#th)"/>
<rect x="990" y="605" width="14" height="38" fill="#000"/>
<text transform="translate(1078.3 630.8) scale(0.81 1)" font-size="19.2" fill="#f0f0f0">White</text>
<text transform="translate(1154.7 630.8) scale(0.81 1)" font-size="19.2" fill="#f0f0f0">Red</text>
<text transform="translate(1222.2 630.8) scale(0.81 1)" font-size="19.2" fill="#f0f0f0">Green</text>
<text transform="translate(1298.9 630.8) scale(0.81 1)" font-size="19.2" fill="#f0f0f0">Blue</text>
<text transform="translate(1366 630.8) scale(0.81 1)" font-size="19.2" fill="#f0f0f0">Cyan</text>
<text transform="translate(1442.9 630.8) scale(0.81 1)" font-size="19.2" fill="#f0f0f0">Magenta</text>
<text transform="translate(1511.3 630.8) scale(0.81 1)" font-size="19.2" fill="#f0f0f0">Yellow</text>
<text transform="translate(1588.5 630.8) scale(0.81 1)" font-size="19.2" fill="#f0f0f0">100W</text>
<rect x="1004" y="642.6" width="599" height="34.75" fill="#404040"/>
<rect x="990" y="642.6" width="14" height="34.75" fill="url(#rh)"/>
<rect x="990" y="642.6" width="14" height="1.2" fill="#1a1a1a"/>
<text transform="translate(1008 667) scale(0.81 1)" font-size="19.6" fill="#f0f0f0">x: CIE31</text>
<text transform="translate(1078.3 667) scale(0.81 1)" font-size="19.6" fill="#f0f0f0">0,2885</text>
<text transform="translate(1154.7 667) scale(0.81 1)" font-size="19.6" fill="#f0f0f0">0,6383</text>
<text transform="translate(1222.2 667) scale(0.81 1)" font-size="19.6" fill="#f0f0f0">0,3142</text>
<text transform="translate(1298.9 667) scale(0.81 1)" font-size="19.6" fill="#f0f0f0">0,1464</text>
<text transform="translate(1366 667) scale(0.81 1)" font-size="19.6" fill="#f0f0f0">0,2175</text>
<text transform="translate(1442.9 667) scale(0.81 1)" font-size="19.6" fill="#f0f0f0">0,2728</text>
<text transform="translate(1511.3 667) scale(0.81 1)" font-size="19.6" fill="#f0f0f0">0,4048</text>
<text transform="translate(1588.5 667) scale(0.81 1)" font-size="19.6" fill="#f0f0f0">0,2915</text>
<rect x="1004" y="677.35" width="599" height="34.75" fill="#7c7c7c"/>
<rect x="990" y="677.35" width="14" height="34.75" fill="url(#rh)"/>
<rect x="990" y="677.35" width="14" height="1.2" fill="#1a1a1a"/>
<text transform="translate(1008 701.75) scale(0.81 1)" font-size="19.6" fill="#f0f0f0">y: CIE31</text>
<text transform="translate(1078.3 701.75) scale(0.81 1)" font-size="19.6" fill="#f0f0f0">0,2942</text>
<text transform="translate(1154.7 701.75) scale(0.81 1)" font-size="19.6" fill="#f0f0f0">0,3390</text>
<text transform="translate(1222.2 701.75) scale(0.81 1)" font-size="19.6" fill="#f0f0f0">0,5835</text>
<text transform="translate(1298.9 701.75) scale(0.81 1)" font-size="19.6" fill="#f0f0f0">0,0480</text>
<text transform="translate(1366 701.75) scale(0.81 1)" font-size="19.6" fill="#f0f0f0">0,2759</text>
<text transform="translate(1442.9 701.75) scale(0.81 1)" font-size="19.6" fill="#f0f0f0">0,1222</text>
<text transform="translate(1511.3 701.75) scale(0.81 1)" font-size="19.6" fill="#f0f0f0">0,5172</text>
<text transform="translate(1588.5 701.75) scale(0.81 1)" font-size="19.6" fill="#f0f0f0">0,2987</text>
<rect x="1004" y="712.1" width="599" height="34.75" fill="#404040"/>
<rect x="990" y="712.1" width="14" height="34.75" fill="url(#rh)"/>
<rect x="990" y="712.1" width="14" height="1.2" fill="#1a1a1a"/>
<text transform="translate(1008 736.5) scale(0.81 1)" font-size="19.6" fill="#f0f0f0">Y</text>
<text transform="translate(1078.3 736.5) scale(0.81 1)" font-size="19.6" fill="#f0f0f0">185,7464</text>
<text transform="translate(1154.7 736.5) scale(0.81 1)" font-size="19.6" fill="#f0f0f0">36,2564</text>
<text transform="translate(1222.2 736.5) scale(0.81 1)" font-size="19.6" fill="#f0f0f0">140,9752</text>
<text transform="translate(1298.9 736.5) scale(0.81 1)" font-size="19.6" fill="#f0f0f0">14,4736</text>
<text transform="translate(1366 736.5) scale(0.81 1)" font-size="19.6" fill="#f0f0f0">150,5439</text>
<text transform="translate(1442.9 736.5) scale(0.81 1)" font-size="19.6" fill="#f0f0f0">48,4835</text>
<text transform="translate(1511.3 736.5) scale(0.81 1)" font-size="19.6" fill="#f0f0f0">175,6664</text>
<text transform="translate(1588.5 736.5) scale(0.81 1)" font-size="19.6" fill="#f0f0f0">341,3912</text>
<rect x="1004" y="746.85" width="599" height="34.75" fill="#7c7c7c"/>
<rect x="990" y="746.85" width="14" height="34.75" fill="url(#rh)"/>
<rect x="990" y="746.85" width="14" height="1.2" fill="#1a1a1a"/>
<text transform="translate(1008 771.25) scale(0.81 1)" font-size="19.6" fill="#f0f0f0">Target Y</text>
<text transform="translate(1078.3 771.25) scale(0.81 1)" font-size="19.6" fill="#f0f0f0">185,7464</text>
<text transform="translate(1154.7 771.25) scale(0.81 1)" font-size="19.6" fill="#f0f0f0">39,5001</text>
<text transform="translate(1222.2 771.25) scale(0.81 1)" font-size="19.6" fill="#f0f0f0">132,8381</text>
<text transform="translate(1298.9 771.25) scale(0.81 1)" font-size="19.6" fill="#f0f0f0">13,4082</text>
<text transform="translate(1366 771.25) scale(0.81 1)" font-size="19.6" fill="#f0f0f0">146,2463</text>
<text transform="translate(1442.9 771.25) scale(0.81 1)" font-size="19.6" fill="#f0f0f0">52,9083</text>
<text transform="translate(1511.3 771.25) scale(0.81 1)" font-size="19.6" fill="#f0f0f0">172,3382</text>
<text transform="translate(1588.5 771.25) scale(0.81 1)" font-size="19.6" fill="#f0f0f0">341,3912</text>
<rect x="1004" y="781.6" width="599" height="34.75" fill="#404040"/>
<rect x="990" y="781.6" width="14" height="34.75" fill="url(#rh)"/>
<rect x="990" y="781.6" width="14" height="1.2" fill="#1a1a1a"/>
<text transform="translate(1008 806) scale(0.81 1)" font-size="19.6" fill="#f0f0f0">ΔE 2000</text>
<text transform="translate(1078.3 806) scale(0.81 1)" font-size="19.6" fill="#f0f0f0">11,9511</text>
<text transform="translate(1154.7 806) scale(0.81 1)" font-size="19.6" fill="#f0f0f0">2,9061</text>
<text transform="translate(1222.2 806) scale(0.81 1)" font-size="19.6" fill="#f0f0f0">2,1486</text>
<text transform="translate(1298.9 806) scale(0.81 1)" font-size="19.6" fill="#f0f0f0">3,9594</text>
<text transform="translate(1366 806) scale(0.81 1)" font-size="19.6" fill="#f0f0f0">13,4901</text>
<text transform="translate(1442.9 806) scale(0.81 1)" font-size="19.6" fill="#f0f0f0">5,5276</text>
<text transform="translate(1511.3 806) scale(0.81 1)" font-size="19.6" fill="#f0f0f0">3,7039</text>
<text transform="translate(1588.5 806) scale(0.81 1)" font-size="19.6" fill="#f0f0f0">12,4312</text>
</g>
<rect x="1603" y="643" width="16" height="153" fill="#565656" rx="3"/>
<rect x="1603.5" y="643.5" width="15" height="18" fill="#777" rx="3"/>
<rect x="1603.5" y="777.5" width="15" height="18" fill="#777" rx="3"/>
<path d="M1605.5 657h11l-5.5-8z" fill="#3a3a3a"/><path d="M1605.5 782h11l-5.5 8z" fill="#3a3a3a"/>
<rect x="1604.5" y="665" width="13" height="88" fill="#404040" rx="6"/>
<rect x="1004" y="796.5" width="599" height="21" fill="#565656" rx="3"/>
<rect x="1004.5" y="797.5" width="15" height="19" fill="#777" rx="3"/>
<rect x="1587.5" y="797.5" width="15" height="19" fill="#777" rx="3"/>
<path d="M1015.5 801v12l-7.5-6z" fill="#3a3a3a"/><path d="M1591.5 801v12l7.5-6z" fill="#3a3a3a"/>
<rect x="1021.5" y="799.5" width="514" height="15" fill="#404040" rx="7"/>
<rect x="0.8" y="827" width="155" height="80" rx="5" fill="url(#btn)"/>
<rect x="7" y="833.5" width="143" height="44.5" rx="4.5" fill="#c0c0c0" stroke="#00000030" stroke-width="1"/>
<text x="78.3" y="897.3" font-size="13" fill="#262626" stroke="#262626" stroke-width="0.22" text-anchor="middle" font-weight="bold">White</text>
<rect x="158.73" y="827" width="155" height="80" rx="5" fill="url(#btn)"/>
<rect x="164.93" y="833.5" width="143" height="44.5" rx="4.5" fill="#c40000" stroke="#00000030" stroke-width="1"/>
<text x="236.23" y="897.3" font-size="13" fill="#262626" stroke="#262626" stroke-width="0.22" text-anchor="middle" font-weight="bold">Red</text>
<rect x="316.66" y="827" width="155" height="80" rx="5" fill="url(#btn)"/>
<rect x="322.86" y="833.5" width="143" height="44.5" rx="4.5" fill="#00c400" stroke="#00000030" stroke-width="1"/>
<text x="394.16" y="897.3" font-size="13" fill="#262626" stroke="#262626" stroke-width="0.22" text-anchor="middle" font-weight="bold">Green</text>
<rect x="474.59" y="827" width="155" height="80" rx="5" fill="url(#btn)"/>
<rect x="480.79" y="833.5" width="143" height="44.5" rx="4.5" fill="#0000c4" stroke="#00000030" stroke-width="1"/>
<text x="552.09" y="897.3" font-size="13" fill="#262626" stroke="#262626" stroke-width="0.22" text-anchor="middle" font-weight="bold">Blue</text>
<rect x="632.52" y="827" width="155" height="80" rx="5" fill="url(#btn)"/>
<rect x="638.72" y="833.5" width="143" height="44.5" rx="4.5" fill="#00c4c4" stroke="#00000030" stroke-width="1"/>
<text x="710.02" y="897.3" font-size="13" fill="#262626" stroke="#262626" stroke-width="0.22" text-anchor="middle" font-weight="bold">Cyan</text>
<rect x="790.45" y="827" width="155" height="80" rx="5" fill="url(#btn)"/>
<rect x="796.65" y="833.5" width="143" height="44.5" rx="4.5" fill="#c400c4" stroke="#00000030" stroke-width="1"/>
<text x="867.95" y="897.3" font-size="13" fill="#262626" stroke="#262626" stroke-width="0.22" text-anchor="middle" font-weight="bold">Magenta</text>
<rect x="948.38" y="827" width="155" height="80" rx="5" fill="url(#btn)"/>
<rect x="954.58" y="833.5" width="143" height="44.5" rx="4.5" fill="#c4c400" stroke="#00000030" stroke-width="1"/>
<text x="1025.88" y="897.3" font-size="13" fill="#262626" stroke="#262626" stroke-width="0.22" text-anchor="middle" font-weight="bold">Yellow</text>
<rect x="1106.31" y="827" width="155" height="80" rx="5" fill="#1c1c1c"/>
<rect x="1112.51" y="833.5" width="143" height="44.5" rx="4.5" fill="#ffffff" stroke="#888" stroke-width="1"/>
<text x="1183.81" y="897.3" font-size="13" fill="#fff" stroke="#fff" stroke-width="0.22" text-anchor="middle" font-weight="bold">100W</text>
<path d="M1265.5 849V832q0-5 5-5H1320q5 0 5 5V849z" fill="url(#btn2)"/>
<rect x="1265.5" y="850.5" width="60" height="47" fill="url(#btn2)"/>
<ellipse cx="1295.5" cy="837" rx="10" ry="9" fill="url(#cir)"/><path d="M1289.5 840h12l-6-6.5z" fill="#2a2a2a"/>
<rect x="1276.2" y="858" width="37.6" height="37" rx="6" fill="url(#stp)" stroke="#1e1e1e" stroke-width="2.4"/>
<rect x="1286.5" y="868" width="17.5" height="17.5" fill="#000"/>
<rect x="1327" y="826.5" width="56.5" height="37.2" fill="url(#btn2)"/>
<circle cx="1355.65" cy="845" r="12" fill="url(#cir)"/>
<rect x="1350.65" y="840" width="10" height="10" fill="#333"/>
<rect x="1385.1" y="826.5" width="54.8" height="37.2" fill="url(#btn2)"/>
<circle cx="1412.5" cy="845" r="12" fill="url(#cir)"/>
<path d="M1408.5 839v12l10-6z" fill="#333"/>
<rect x="1441.5" y="826.5" width="54.7" height="37.2" fill="url(#btn2)"/>
<circle cx="1468.85" cy="845" r="12" fill="url(#cir)"/>
<text x="1468.85" y="849.5" font-size="12.5" fill="#2c2c2c" stroke="#2c2c2c" stroke-width="0.21" text-anchor="middle" font-weight="bold" textLength="19" lengthAdjust="spacingAndGlyphs">[↔]</text>
<rect x="1497.8" y="826.5" width="54.6" height="37.2" fill="url(#btn2)"/>
<circle cx="1525.1" cy="845" r="12" fill="url(#cir)"/>
<text x="1525.1" y="850.5" font-size="17" fill="#333" stroke="#333" stroke-width="0.29" text-anchor="middle" font-weight="bold">∞</text>
<rect x="1554" y="826.5" width="54.2" height="37.2" fill="url(#btn2)"/>
<circle cx="1581.1" cy="845" r="12" fill="url(#cir)"/>
<text x="1581.1" y="851" font-size="17" fill="#333" stroke="#333" stroke-width="0.29" text-anchor="middle" font-weight="bold">⟳</text>
<path d="M1327 897V870q0-4 4-4H1496V897z" fill="url(#btn3)"/>
<rect x="1498" y="866" width="165" height="31" fill="url(#btn3)"/>
<circle cx="1365" cy="884" r="11.5" fill="url(#cir)"/><circle cx="1631.5" cy="884" r="11.5" fill="url(#cir)"/>
<text x="1365" y="891" font-size="19" fill="#444" stroke="#444" stroke-width="0.32" text-anchor="middle">«</text>
<text x="1631.5" y="891" font-size="19" fill="#444" stroke="#444" stroke-width="0.32" text-anchor="middle">»</text>
<text x="1398" y="897.5" font-size="30.5" fill="#404040" stroke="#404040" stroke-width="0.9" textLength="64" lengthAdjust="spacingAndGlyphs">Back</text>
<text x="1532" y="897.5" font-size="30.5" fill="#404040" stroke="#404040" stroke-width="0.9" textLength="64" lengthAdjust="spacingAndGlyphs">Next</text>
<text x="1636.4" y="860" font-size="46" fill="#e80c0c" text-anchor="middle" style="font-family:'DejaVu Sans',sans-serif;filter:drop-shadow(1px 1.5px 1px #0009)">✱</text>
</svg>
</body></html>
